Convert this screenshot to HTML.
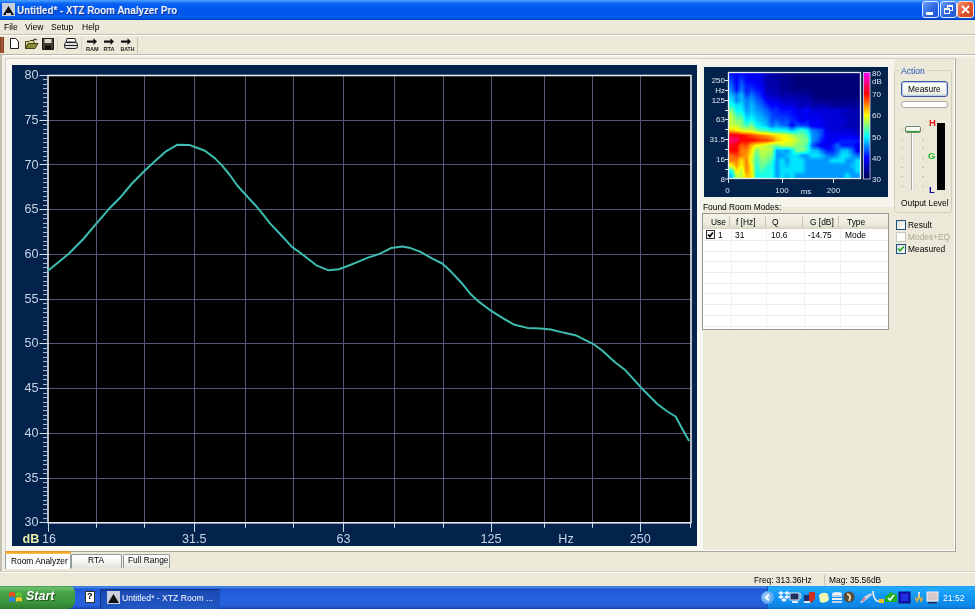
<!DOCTYPE html>
<html><head><meta charset="utf-8">
<style>
*{margin:0;padding:0;box-sizing:border-box}
html,body{width:975px;height:609px;overflow:hidden;background:#ece9d8;font-family:"Liberation Sans",sans-serif;position:relative}
.a{position:absolute}
.t{position:absolute;white-space:nowrap;line-height:1;will-change:transform}
#title{left:0;top:0;width:975px;height:20px;background:linear-gradient(#4aa0ff 0,#3088fa 1.5px,#0c64f2 3.5px,#005af0 7px,#0056ea 14px,#0860f2 17px,#0048d4 19px,#0038b0 20px)}
.ax{font-size:12.6px;fill:#c6d4e4;font-family:"Liberation Sans",sans-serif}
.db{font-size:12.6px;font-weight:bold;fill:#e6eea8;font-family:"Liberation Sans",sans-serif}
.sl{font-size:8px;fill:#dde4ee;font-family:"Liberation Sans",sans-serif}
.menu{font-size:8.5px;color:#000;top:22.5px}
.tb{font-size:8.4px;color:#000}
</style></head><body>
<!-- title bar -->
<div id="title" class="a"></div>
<svg class="a" style="left:2px;top:3px" width="13" height="13" viewBox="0 0 13 13">
<rect x="0" y="0" width="13" height="13" fill="#c8d0dc"/>
<path d="M1,12 L6.5,3 L12,12 Z" fill="#101010"/>
<rect x="4" y="10" width="5" height="2" fill="#d0d0d0"/>
</svg>
<div class="t" style="left:16.5px;top:5px;font-size:11.4px;font-weight:bold;color:#fff;text-shadow:1px 1px 0 #0a2a8a;transform:scaleX(0.86);transform-origin:0 0">Untitled* - XTZ Room Analyzer Pro</div>
<!-- window buttons -->
<div class="a" style="left:922px;top:1px;width:17px;height:17px;border:1px solid #dfe8ff;border-radius:3px;background:linear-gradient(135deg,#6b9ef8,#2a62e0 60%,#1f55d0)"></div>
<div class="a" style="left:926px;top:12px;width:7px;height:3px;background:#fff"></div>
<div class="a" style="left:940px;top:1px;width:17px;height:17px;border:1px solid #dfe8ff;border-radius:3px;background:linear-gradient(135deg,#6b9ef8,#2a62e0 60%,#1f55d0)"></div>
<div class="a" style="left:947px;top:5px;width:6px;height:6px;border:1px solid #fff;border-top-width:2px"></div>
<div class="a" style="left:944px;top:8px;width:6px;height:6px;border:1px solid #fff;border-top-width:2px;background:#2f66e0"></div>
<div class="a" style="left:957px;top:1px;width:17px;height:17px;border:1px solid #f4e0d8;border-radius:3px;background:linear-gradient(135deg,#f08c6c,#e0542c 55%,#c8401c)"></div>
<svg class="a" style="left:960px;top:4px" width="11" height="11"><path d="M2,2 L9,9 M9,2 L2,9" stroke="#fff" stroke-width="1.8"/></svg>
<!-- menu -->
<div class="t menu" style="left:4px">File</div>
<div class="t menu" style="left:25.2px">View</div>
<div class="t menu" style="left:51.3px">Setup</div>
<div class="t menu" style="left:81.5px">Help</div>
<div class="a" style="left:0;top:34px;width:975px;height:1px;background:#c5c2b2"></div>
<div class="a" style="left:0;top:35px;width:975px;height:1px;background:#fff"></div>
<!-- toolbar -->
<div class="a" style="left:0;top:37px;width:4px;height:16px;background:linear-gradient(90deg,#7a3a1a,#b06040,#7a3a1a)"></div>
<div class="a" style="left:0;top:54px;width:975px;height:1px;background:#bcb8a8"></div>
<div class="a" style="left:0;top:55px;width:975px;height:1px;background:#fff"></div>
<div class="a" style="left:137px;top:37px;width:1px;height:16px;background:#c5c2b2"></div>
<div class="a" style="left:57px;top:38px;width:1px;height:14px;background:#d4d0c0"></div>
<div class="a" style="left:81px;top:38px;width:1px;height:14px;background:#d4d0c0"></div>
<!-- new -->
<svg class="a" style="left:9px;top:38px" width="11" height="12"><path d="M1.5,0.5 H6.5 L9.5,3.5 V10.5 H1.5 Z" fill="#fff" stroke="#202020"/></svg>
<!-- open -->
<svg class="a" style="left:25px;top:38px" width="14" height="12"><path d="M0.5,3.5 H4 L5,2.5 H9 V10.5 H0.5 Z" fill="#d8d890" stroke="#40401a"/><path d="M0.5,10.5 L3,5.5 H13 L10,10.5 Z" fill="#8a8a38" stroke="#40401a"/><path d="M8,2 Q10,0 12,2" fill="none" stroke="#202020"/></svg>
<!-- save -->
<svg class="a" style="left:42px;top:38px" width="12" height="12"><rect x="0.5" y="0.5" width="11" height="11" fill="#404028" stroke="#202010"/><rect x="2.5" y="1" width="7" height="4" fill="#d8d8c8"/><rect x="3" y="7.5" width="6" height="4" fill="#101010"/></svg>
<!-- print -->
<svg class="a" style="left:64px;top:38px" width="14" height="12"><path d="M3,0.5 H11 L12,4 H2 Z" fill="#fff" stroke="#202020"/><rect x="0.5" y="4.5" width="13" height="6" rx="2" fill="#e0e0e0" stroke="#202020"/><line x1="1" y1="7.5" x2="13" y2="7.5" stroke="#202020"/></svg>
<!-- arrows -->
<svg class="a" style="left:84px;top:37px;will-change:transform" width="54" height="16">
<g fill="#101010"><rect x="3" y="3.5" width="7" height="2.2"/><path d="M9.5,1.2 L13,4.6 L9.5,8Z"/>
<rect x="20" y="3.5" width="7" height="2.2"/><path d="M26.5,1.2 L30,4.6 L26.5,8Z"/>
<rect x="37" y="3.5" width="7" height="2.2"/><path d="M43.5,1.2 L47,4.6 L43.5,8Z"/></g>
<g font-size="5.6" font-weight="bold" font-family="Liberation Sans" fill="#202020">
<text x="2" y="14">RAM</text><text x="19.5" y="14">RTA</text><text x="36.5" y="14" textLength="14" lengthAdjust="spacingAndGlyphs">BATH</text></g>
</svg>
<!-- main panel border -->
<div class="a" style="left:0;top:55px;width:2px;height:517px;background:#c4c0b0"></div>
<div class="a" style="left:2px;top:56px;width:973px;height:2px;background:#f2f0e6"></div>
<div class="a" style="left:2px;top:55px;width:3px;height:516px;background:#f2f0e6"></div>
<div class="a" style="left:5px;top:58px;width:951px;height:494px;border-top:1px solid #d4d0c2;border-left:1px solid #d4d0c2;border-right:1px solid #a8a496;border-bottom:1px solid #a8a496;box-shadow:inset -1px -1px 0 #fff"></div>
<div class="a" style="left:6px;top:59px;width:697px;height:492px;background:#f7f6f0"></div>
<div class="a" style="left:698px;top:59px;width:1px;height:492px;background:#fff"></div>
<div class="a" style="left:699px;top:59px;width:195px;height:148px;background:#f4f3ec"></div>
<!-- chart -->
<svg class="a" style="left:0;top:0;will-change:transform" width="975" height="609">
<rect x="12" y="65" width="685" height="481" fill="#04234c"/>
<rect x="48" y="75.5" width="643" height="447.29999999999995" fill="#000"/>
<line x1="48" y1="478.5" x2="691" y2="478.5" stroke="#56547a" stroke-width="1"/>
<line x1="48" y1="433.5" x2="691" y2="433.5" stroke="#56547a" stroke-width="1"/>
<line x1="48" y1="388.5" x2="691" y2="388.5" stroke="#56547a" stroke-width="1"/>
<line x1="48" y1="343.5" x2="691" y2="343.5" stroke="#56547a" stroke-width="1"/>
<line x1="48" y1="299.5" x2="691" y2="299.5" stroke="#56547a" stroke-width="1"/>
<line x1="48" y1="254.5" x2="691" y2="254.5" stroke="#56547a" stroke-width="1"/>
<line x1="48" y1="209.5" x2="691" y2="209.5" stroke="#56547a" stroke-width="1"/>
<line x1="48" y1="164.5" x2="691" y2="164.5" stroke="#56547a" stroke-width="1"/>
<line x1="48" y1="120.5" x2="691" y2="120.5" stroke="#56547a" stroke-width="1"/>
<line x1="96.5" y1="75.5" x2="96.5" y2="522.8" stroke="#56547a" stroke-width="1"/>
<line x1="144.5" y1="75.5" x2="144.5" y2="522.8" stroke="#56547a" stroke-width="1"/>
<line x1="194.5" y1="75.5" x2="194.5" y2="522.8" stroke="#56547a" stroke-width="1"/>
<line x1="245.5" y1="75.5" x2="245.5" y2="522.8" stroke="#56547a" stroke-width="1"/>
<line x1="293.5" y1="75.5" x2="293.5" y2="522.8" stroke="#56547a" stroke-width="1"/>
<line x1="343.5" y1="75.5" x2="343.5" y2="522.8" stroke="#56547a" stroke-width="1"/>
<line x1="394.5" y1="75.5" x2="394.5" y2="522.8" stroke="#56547a" stroke-width="1"/>
<line x1="443.5" y1="75.5" x2="443.5" y2="522.8" stroke="#56547a" stroke-width="1"/>
<line x1="491.5" y1="75.5" x2="491.5" y2="522.8" stroke="#56547a" stroke-width="1"/>
<line x1="544.5" y1="75.5" x2="544.5" y2="522.8" stroke="#56547a" stroke-width="1"/>
<line x1="592.5" y1="75.5" x2="592.5" y2="522.8" stroke="#56547a" stroke-width="1"/>
<line x1="640.5" y1="75.5" x2="640.5" y2="522.8" stroke="#56547a" stroke-width="1"/>
<rect x="48" y="75.5" width="643" height="447.29999999999995" fill="none" stroke="#e8e8f0" stroke-width="1.6"/>
<line x1="39.5" y1="522.5" x2="48" y2="522.5" stroke="#d0dcea" stroke-width="1"/>
<line x1="43" y1="518.5" x2="47.5" y2="518.5" stroke="#aab8c8" stroke-width="1"/>
<line x1="43" y1="513.5" x2="47.5" y2="513.5" stroke="#aab8c8" stroke-width="1"/>
<line x1="43" y1="509.5" x2="47.5" y2="509.5" stroke="#aab8c8" stroke-width="1"/>
<line x1="43" y1="504.5" x2="47.5" y2="504.5" stroke="#aab8c8" stroke-width="1"/>
<line x1="43" y1="500.5" x2="47.5" y2="500.5" stroke="#aab8c8" stroke-width="1"/>
<line x1="43" y1="495.5" x2="47.5" y2="495.5" stroke="#aab8c8" stroke-width="1"/>
<line x1="43" y1="491.5" x2="47.5" y2="491.5" stroke="#aab8c8" stroke-width="1"/>
<line x1="43" y1="487.5" x2="47.5" y2="487.5" stroke="#aab8c8" stroke-width="1"/>
<line x1="43" y1="482.5" x2="47.5" y2="482.5" stroke="#aab8c8" stroke-width="1"/>
<line x1="39.5" y1="478.5" x2="48" y2="478.5" stroke="#d0dcea" stroke-width="1"/>
<line x1="43" y1="473.5" x2="47.5" y2="473.5" stroke="#aab8c8" stroke-width="1"/>
<line x1="43" y1="469.5" x2="47.5" y2="469.5" stroke="#aab8c8" stroke-width="1"/>
<line x1="43" y1="464.5" x2="47.5" y2="464.5" stroke="#aab8c8" stroke-width="1"/>
<line x1="43" y1="460.5" x2="47.5" y2="460.5" stroke="#aab8c8" stroke-width="1"/>
<line x1="43" y1="455.5" x2="47.5" y2="455.5" stroke="#aab8c8" stroke-width="1"/>
<line x1="43" y1="451.5" x2="47.5" y2="451.5" stroke="#aab8c8" stroke-width="1"/>
<line x1="43" y1="446.5" x2="47.5" y2="446.5" stroke="#aab8c8" stroke-width="1"/>
<line x1="43" y1="442.5" x2="47.5" y2="442.5" stroke="#aab8c8" stroke-width="1"/>
<line x1="43" y1="437.5" x2="47.5" y2="437.5" stroke="#aab8c8" stroke-width="1"/>
<line x1="39.5" y1="433.5" x2="48" y2="433.5" stroke="#d0dcea" stroke-width="1"/>
<line x1="43" y1="428.5" x2="47.5" y2="428.5" stroke="#aab8c8" stroke-width="1"/>
<line x1="43" y1="424.5" x2="47.5" y2="424.5" stroke="#aab8c8" stroke-width="1"/>
<line x1="43" y1="419.5" x2="47.5" y2="419.5" stroke="#aab8c8" stroke-width="1"/>
<line x1="43" y1="415.5" x2="47.5" y2="415.5" stroke="#aab8c8" stroke-width="1"/>
<line x1="43" y1="410.5" x2="47.5" y2="410.5" stroke="#aab8c8" stroke-width="1"/>
<line x1="43" y1="406.5" x2="47.5" y2="406.5" stroke="#aab8c8" stroke-width="1"/>
<line x1="43" y1="402.5" x2="47.5" y2="402.5" stroke="#aab8c8" stroke-width="1"/>
<line x1="43" y1="397.5" x2="47.5" y2="397.5" stroke="#aab8c8" stroke-width="1"/>
<line x1="43" y1="393.5" x2="47.5" y2="393.5" stroke="#aab8c8" stroke-width="1"/>
<line x1="39.5" y1="388.5" x2="48" y2="388.5" stroke="#d0dcea" stroke-width="1"/>
<line x1="43" y1="384.5" x2="47.5" y2="384.5" stroke="#aab8c8" stroke-width="1"/>
<line x1="43" y1="379.5" x2="47.5" y2="379.5" stroke="#aab8c8" stroke-width="1"/>
<line x1="43" y1="375.5" x2="47.5" y2="375.5" stroke="#aab8c8" stroke-width="1"/>
<line x1="43" y1="370.5" x2="47.5" y2="370.5" stroke="#aab8c8" stroke-width="1"/>
<line x1="43" y1="366.5" x2="47.5" y2="366.5" stroke="#aab8c8" stroke-width="1"/>
<line x1="43" y1="361.5" x2="47.5" y2="361.5" stroke="#aab8c8" stroke-width="1"/>
<line x1="43" y1="357.5" x2="47.5" y2="357.5" stroke="#aab8c8" stroke-width="1"/>
<line x1="43" y1="352.5" x2="47.5" y2="352.5" stroke="#aab8c8" stroke-width="1"/>
<line x1="43" y1="348.5" x2="47.5" y2="348.5" stroke="#aab8c8" stroke-width="1"/>
<line x1="39.5" y1="343.5" x2="48" y2="343.5" stroke="#d0dcea" stroke-width="1"/>
<line x1="43" y1="339.5" x2="47.5" y2="339.5" stroke="#aab8c8" stroke-width="1"/>
<line x1="43" y1="334.5" x2="47.5" y2="334.5" stroke="#aab8c8" stroke-width="1"/>
<line x1="43" y1="330.5" x2="47.5" y2="330.5" stroke="#aab8c8" stroke-width="1"/>
<line x1="43" y1="325.5" x2="47.5" y2="325.5" stroke="#aab8c8" stroke-width="1"/>
<line x1="43" y1="321.5" x2="47.5" y2="321.5" stroke="#aab8c8" stroke-width="1"/>
<line x1="43" y1="317.5" x2="47.5" y2="317.5" stroke="#aab8c8" stroke-width="1"/>
<line x1="43" y1="312.5" x2="47.5" y2="312.5" stroke="#aab8c8" stroke-width="1"/>
<line x1="43" y1="308.5" x2="47.5" y2="308.5" stroke="#aab8c8" stroke-width="1"/>
<line x1="43" y1="303.5" x2="47.5" y2="303.5" stroke="#aab8c8" stroke-width="1"/>
<line x1="39.5" y1="299.5" x2="48" y2="299.5" stroke="#d0dcea" stroke-width="1"/>
<line x1="43" y1="294.5" x2="47.5" y2="294.5" stroke="#aab8c8" stroke-width="1"/>
<line x1="43" y1="290.5" x2="47.5" y2="290.5" stroke="#aab8c8" stroke-width="1"/>
<line x1="43" y1="285.5" x2="47.5" y2="285.5" stroke="#aab8c8" stroke-width="1"/>
<line x1="43" y1="281.5" x2="47.5" y2="281.5" stroke="#aab8c8" stroke-width="1"/>
<line x1="43" y1="276.5" x2="47.5" y2="276.5" stroke="#aab8c8" stroke-width="1"/>
<line x1="43" y1="272.5" x2="47.5" y2="272.5" stroke="#aab8c8" stroke-width="1"/>
<line x1="43" y1="267.5" x2="47.5" y2="267.5" stroke="#aab8c8" stroke-width="1"/>
<line x1="43" y1="263.5" x2="47.5" y2="263.5" stroke="#aab8c8" stroke-width="1"/>
<line x1="43" y1="258.5" x2="47.5" y2="258.5" stroke="#aab8c8" stroke-width="1"/>
<line x1="39.5" y1="254.5" x2="48" y2="254.5" stroke="#d0dcea" stroke-width="1"/>
<line x1="43" y1="249.5" x2="47.5" y2="249.5" stroke="#aab8c8" stroke-width="1"/>
<line x1="43" y1="245.5" x2="47.5" y2="245.5" stroke="#aab8c8" stroke-width="1"/>
<line x1="43" y1="241.5" x2="47.5" y2="241.5" stroke="#aab8c8" stroke-width="1"/>
<line x1="43" y1="236.5" x2="47.5" y2="236.5" stroke="#aab8c8" stroke-width="1"/>
<line x1="43" y1="232.5" x2="47.5" y2="232.5" stroke="#aab8c8" stroke-width="1"/>
<line x1="43" y1="227.5" x2="47.5" y2="227.5" stroke="#aab8c8" stroke-width="1"/>
<line x1="43" y1="223.5" x2="47.5" y2="223.5" stroke="#aab8c8" stroke-width="1"/>
<line x1="43" y1="218.5" x2="47.5" y2="218.5" stroke="#aab8c8" stroke-width="1"/>
<line x1="43" y1="214.5" x2="47.5" y2="214.5" stroke="#aab8c8" stroke-width="1"/>
<line x1="39.5" y1="209.5" x2="48" y2="209.5" stroke="#d0dcea" stroke-width="1"/>
<line x1="43" y1="205.5" x2="47.5" y2="205.5" stroke="#aab8c8" stroke-width="1"/>
<line x1="43" y1="200.5" x2="47.5" y2="200.5" stroke="#aab8c8" stroke-width="1"/>
<line x1="43" y1="196.5" x2="47.5" y2="196.5" stroke="#aab8c8" stroke-width="1"/>
<line x1="43" y1="191.5" x2="47.5" y2="191.5" stroke="#aab8c8" stroke-width="1"/>
<line x1="43" y1="187.5" x2="47.5" y2="187.5" stroke="#aab8c8" stroke-width="1"/>
<line x1="43" y1="182.5" x2="47.5" y2="182.5" stroke="#aab8c8" stroke-width="1"/>
<line x1="43" y1="178.5" x2="47.5" y2="178.5" stroke="#aab8c8" stroke-width="1"/>
<line x1="43" y1="173.5" x2="47.5" y2="173.5" stroke="#aab8c8" stroke-width="1"/>
<line x1="43" y1="169.5" x2="47.5" y2="169.5" stroke="#aab8c8" stroke-width="1"/>
<line x1="39.5" y1="164.5" x2="48" y2="164.5" stroke="#d0dcea" stroke-width="1"/>
<line x1="43" y1="160.5" x2="47.5" y2="160.5" stroke="#aab8c8" stroke-width="1"/>
<line x1="43" y1="156.5" x2="47.5" y2="156.5" stroke="#aab8c8" stroke-width="1"/>
<line x1="43" y1="151.5" x2="47.5" y2="151.5" stroke="#aab8c8" stroke-width="1"/>
<line x1="43" y1="147.5" x2="47.5" y2="147.5" stroke="#aab8c8" stroke-width="1"/>
<line x1="43" y1="142.5" x2="47.5" y2="142.5" stroke="#aab8c8" stroke-width="1"/>
<line x1="43" y1="138.5" x2="47.5" y2="138.5" stroke="#aab8c8" stroke-width="1"/>
<line x1="43" y1="133.5" x2="47.5" y2="133.5" stroke="#aab8c8" stroke-width="1"/>
<line x1="43" y1="129.5" x2="47.5" y2="129.5" stroke="#aab8c8" stroke-width="1"/>
<line x1="43" y1="124.5" x2="47.5" y2="124.5" stroke="#aab8c8" stroke-width="1"/>
<line x1="39.5" y1="120.5" x2="48" y2="120.5" stroke="#d0dcea" stroke-width="1"/>
<line x1="43" y1="115.5" x2="47.5" y2="115.5" stroke="#aab8c8" stroke-width="1"/>
<line x1="43" y1="111.5" x2="47.5" y2="111.5" stroke="#aab8c8" stroke-width="1"/>
<line x1="43" y1="106.5" x2="47.5" y2="106.5" stroke="#aab8c8" stroke-width="1"/>
<line x1="43" y1="102.5" x2="47.5" y2="102.5" stroke="#aab8c8" stroke-width="1"/>
<line x1="43" y1="97.5" x2="47.5" y2="97.5" stroke="#aab8c8" stroke-width="1"/>
<line x1="43" y1="93.5" x2="47.5" y2="93.5" stroke="#aab8c8" stroke-width="1"/>
<line x1="43" y1="88.5" x2="47.5" y2="88.5" stroke="#aab8c8" stroke-width="1"/>
<line x1="43" y1="84.5" x2="47.5" y2="84.5" stroke="#aab8c8" stroke-width="1"/>
<line x1="43" y1="79.5" x2="47.5" y2="79.5" stroke="#aab8c8" stroke-width="1"/>
<line x1="39.5" y1="75.5" x2="48" y2="75.5" stroke="#d0dcea" stroke-width="1"/>
<line x1="48.5" y1="522.8" x2="48.5" y2="531.8" stroke="#d0dcea" stroke-width="1"/>
<line x1="96.5" y1="522.8" x2="96.5" y2="527.8" stroke="#d0dcea" stroke-width="1"/>
<line x1="144.5" y1="522.8" x2="144.5" y2="527.8" stroke="#d0dcea" stroke-width="1"/>
<line x1="194.5" y1="522.8" x2="194.5" y2="531.8" stroke="#d0dcea" stroke-width="1"/>
<line x1="245.5" y1="522.8" x2="245.5" y2="527.8" stroke="#d0dcea" stroke-width="1"/>
<line x1="293.5" y1="522.8" x2="293.5" y2="527.8" stroke="#d0dcea" stroke-width="1"/>
<line x1="343.5" y1="522.8" x2="343.5" y2="531.8" stroke="#d0dcea" stroke-width="1"/>
<line x1="394.5" y1="522.8" x2="394.5" y2="527.8" stroke="#d0dcea" stroke-width="1"/>
<line x1="443.5" y1="522.8" x2="443.5" y2="527.8" stroke="#d0dcea" stroke-width="1"/>
<line x1="491.5" y1="522.8" x2="491.5" y2="531.8" stroke="#d0dcea" stroke-width="1"/>
<line x1="544.5" y1="522.8" x2="544.5" y2="527.8" stroke="#d0dcea" stroke-width="1"/>
<line x1="592.5" y1="522.8" x2="592.5" y2="527.8" stroke="#d0dcea" stroke-width="1"/>
<line x1="640.5" y1="522.8" x2="640.5" y2="531.8" stroke="#d0dcea" stroke-width="1"/>
<line x1="690.5" y1="522.8" x2="690.5" y2="527.8" stroke="#d0dcea" stroke-width="1"/>
<text x="38.4" y="526.3" text-anchor="end" class="ax">30</text>
<text x="38.4" y="481.6" text-anchor="end" class="ax">35</text>
<text x="38.4" y="436.8" text-anchor="end" class="ax">40</text>
<text x="38.4" y="392.1" text-anchor="end" class="ax">45</text>
<text x="38.4" y="347.4" text-anchor="end" class="ax">50</text>
<text x="38.4" y="302.6" text-anchor="end" class="ax">55</text>
<text x="38.4" y="257.9" text-anchor="end" class="ax">60</text>
<text x="38.4" y="213.2" text-anchor="end" class="ax">65</text>
<text x="38.4" y="168.5" text-anchor="end" class="ax">70</text>
<text x="38.4" y="123.7" text-anchor="end" class="ax">75</text>
<text x="38.4" y="79.0" text-anchor="end" class="ax">80</text>
<text x="42" y="543" class="ax">16</text>
<text x="194.3" y="543" text-anchor="middle" class="ax">31.5</text>
<text x="343.5" y="543" text-anchor="middle" class="ax">63</text>
<text x="491.1" y="543" text-anchor="middle" class="ax">125</text>
<text x="640.3" y="543" text-anchor="middle" class="ax">250</text>
<text x="566" y="543" text-anchor="middle" class="ax">Hz</text>
<text x="22.5" y="543" class="db">dB</text>
<polyline points="47.7,271.1 68.5,254 82.9,239.5 96.5,223.3 109.1,208.8 120,197.8 131.5,184 144.7,170.8 154.5,161.6 166,151.3 177.5,144.7 189,144.9 197,147.8 204.9,150.7 214.7,158.1 221.3,164.6 229.5,174.5 237.7,186 245.9,195 255.8,205.7 264,215.6 270,223.4 279.9,233.8 291.7,246.6 302.5,254.5 316.3,265.3 328.1,270.2 339,269.3 345,267 357.3,262.1 368,257.6 379.5,253.9 391,248.1 402.4,246.5 410.6,248.1 420,251.6 431.8,258.3 442.2,263.5 451,271.6 461.4,282.7 470.2,293.7 479.1,301.9 490.9,310.7 502.7,318.1 514.5,324.8 527.3,327.9 540.6,328.5 550.9,329.5 563.2,332.6 576.5,335.6 586.8,340.8 593,343.8 602.2,350.5 615,362.3 624.8,369.7 641.2,387.7 657.6,404.2 667.4,411.5 675.6,416.5 682.2,428.8 689.1,441.1" fill="none" stroke="#3dbdb0" stroke-width="2" stroke-linejoin="round"/>
</svg>
<!-- spectrogram -->
<div class="a" style="left:704px;top:67px;width:184px;height:130px;background:#04234c"></div>
<svg class="a" style="left:729px;top:73px" width="131" height="105" shape-rendering="crispEdges"><rect x="0" y="0" width="3" height="3" fill="#0019ff"/><rect x="3" y="0" width="3" height="3" fill="#000fff"/><rect x="6" y="0" width="3" height="3" fill="#0000ff"/><rect x="9" y="0" width="3" height="3" fill="#000eff"/><rect x="12" y="0" width="3" height="3" fill="#0014ff"/><rect x="15" y="0" width="3" height="3" fill="#0005ff"/><rect x="18" y="0" width="3" height="3" fill="#0000f9"/><rect x="21" y="0" width="3" height="3" fill="#0000ef"/><rect x="24" y="0" width="3" height="3" fill="#0000f3"/><rect x="27" y="0" width="3" height="3" fill="#0000f3"/><rect x="30" y="0" width="3" height="3" fill="#0000e5"/><rect x="33" y="0" width="3" height="3" fill="#0000d0"/><rect x="36" y="0" width="3" height="3" fill="#0000b5"/><rect x="39" y="0" width="3" height="3" fill="#0000aa"/><rect x="42" y="0" width="3" height="3" fill="#0000a3"/><rect x="45" y="0" width="3" height="3" fill="#0000a3"/><rect x="48" y="0" width="3" height="3" fill="#00009d"/><rect x="51" y="0" width="3" height="3" fill="#000091"/><rect x="54" y="0" width="3" height="3" fill="#00008f"/><rect x="57" y="0" width="3" height="3" fill="#00008e"/><rect x="60" y="0" width="3" height="3" fill="#00008a"/><rect x="63" y="0" width="3" height="3" fill="#000084"/><rect x="66" y="0" width="3" height="3" fill="#00007d"/><rect x="69" y="0" width="3" height="3" fill="#00007b"/><rect x="72" y="0" width="3" height="3" fill="#00007b"/><rect x="75" y="0" width="3" height="3" fill="#00007b"/><rect x="78" y="0" width="3" height="3" fill="#00007b"/><rect x="81" y="0" width="3" height="3" fill="#00007b"/><rect x="84" y="0" width="3" height="3" fill="#000079"/><rect x="87" y="0" width="3" height="3" fill="#000077"/><rect x="90" y="0" width="3" height="3" fill="#000077"/><rect x="93" y="0" width="3" height="3" fill="#000077"/><rect x="96" y="0" width="3" height="3" fill="#000077"/><rect x="99" y="0" width="3" height="3" fill="#000077"/><rect x="102" y="0" width="3" height="3" fill="#000077"/><rect x="105" y="0" width="3" height="3" fill="#000077"/><rect x="108" y="0" width="3" height="3" fill="#000077"/><rect x="111" y="0" width="3" height="3" fill="#000077"/><rect x="114" y="0" width="3" height="3" fill="#000077"/><rect x="117" y="0" width="3" height="3" fill="#000077"/><rect x="120" y="0" width="3" height="3" fill="#000077"/><rect x="123" y="0" width="3" height="3" fill="#000077"/><rect x="126" y="0" width="3" height="3" fill="#000077"/><rect x="129" y="0" width="3" height="3" fill="#000077"/><rect x="0" y="3" width="3" height="3" fill="#0028ff"/><rect x="3" y="3" width="3" height="3" fill="#0018ff"/><rect x="6" y="3" width="3" height="3" fill="#0000ff"/><rect x="9" y="3" width="3" height="3" fill="#0017ff"/><rect x="12" y="3" width="3" height="3" fill="#0021ff"/><rect x="15" y="3" width="3" height="3" fill="#0009ff"/><rect x="18" y="3" width="3" height="3" fill="#0000fb"/><rect x="21" y="3" width="3" height="3" fill="#0000f5"/><rect x="24" y="3" width="3" height="3" fill="#0000f6"/><rect x="27" y="3" width="3" height="3" fill="#0000f3"/><rect x="30" y="3" width="3" height="3" fill="#0000e5"/><rect x="33" y="3" width="3" height="3" fill="#0000d0"/><rect x="36" y="3" width="3" height="3" fill="#0000b5"/><rect x="39" y="3" width="3" height="3" fill="#0000aa"/><rect x="42" y="3" width="3" height="3" fill="#0000a3"/><rect x="45" y="3" width="3" height="3" fill="#0000a3"/><rect x="48" y="3" width="3" height="3" fill="#00009d"/><rect x="51" y="3" width="3" height="3" fill="#000091"/><rect x="54" y="3" width="3" height="3" fill="#00008f"/><rect x="57" y="3" width="3" height="3" fill="#00008e"/><rect x="60" y="3" width="3" height="3" fill="#000088"/><rect x="63" y="3" width="3" height="3" fill="#000082"/><rect x="66" y="3" width="3" height="3" fill="#00007b"/><rect x="69" y="3" width="3" height="3" fill="#00007a"/><rect x="72" y="3" width="3" height="3" fill="#00007a"/><rect x="75" y="3" width="3" height="3" fill="#00007a"/><rect x="78" y="3" width="3" height="3" fill="#00007a"/><rect x="81" y="3" width="3" height="3" fill="#00007a"/><rect x="84" y="3" width="3" height="3" fill="#000079"/><rect x="87" y="3" width="3" height="3" fill="#000077"/><rect x="90" y="3" width="3" height="3" fill="#000077"/><rect x="93" y="3" width="3" height="3" fill="#000077"/><rect x="96" y="3" width="3" height="3" fill="#000077"/><rect x="99" y="3" width="3" height="3" fill="#000077"/><rect x="102" y="3" width="3" height="3" fill="#000077"/><rect x="105" y="3" width="3" height="3" fill="#000077"/><rect x="108" y="3" width="3" height="3" fill="#000077"/><rect x="111" y="3" width="3" height="3" fill="#000077"/><rect x="114" y="3" width="3" height="3" fill="#000077"/><rect x="117" y="3" width="3" height="3" fill="#000077"/><rect x="120" y="3" width="3" height="3" fill="#000077"/><rect x="123" y="3" width="3" height="3" fill="#000077"/><rect x="126" y="3" width="3" height="3" fill="#000077"/><rect x="129" y="3" width="3" height="3" fill="#000077"/><rect x="0" y="6" width="3" height="3" fill="#003fff"/><rect x="3" y="6" width="3" height="3" fill="#0026ff"/><rect x="6" y="6" width="3" height="3" fill="#0000ff"/><rect x="9" y="6" width="3" height="3" fill="#0025ff"/><rect x="12" y="6" width="3" height="3" fill="#0034ff"/><rect x="15" y="6" width="3" height="3" fill="#000eff"/><rect x="18" y="6" width="3" height="3" fill="#0000ff"/><rect x="21" y="6" width="3" height="3" fill="#0000ff"/><rect x="24" y="6" width="3" height="3" fill="#0000fa"/><rect x="27" y="6" width="3" height="3" fill="#0000f3"/><rect x="30" y="6" width="3" height="3" fill="#0000e5"/><rect x="33" y="6" width="3" height="3" fill="#0000d0"/><rect x="36" y="6" width="3" height="3" fill="#0000b5"/><rect x="39" y="6" width="3" height="3" fill="#0000aa"/><rect x="42" y="6" width="3" height="3" fill="#0000a3"/><rect x="45" y="6" width="3" height="3" fill="#0000a3"/><rect x="48" y="6" width="3" height="3" fill="#00009d"/><rect x="51" y="6" width="3" height="3" fill="#000091"/><rect x="54" y="6" width="3" height="3" fill="#00008f"/><rect x="57" y="6" width="3" height="3" fill="#00008e"/><rect x="60" y="6" width="3" height="3" fill="#000087"/><rect x="63" y="6" width="3" height="3" fill="#000080"/><rect x="66" y="6" width="3" height="3" fill="#000079"/><rect x="69" y="6" width="3" height="3" fill="#000077"/><rect x="72" y="6" width="3" height="3" fill="#000077"/><rect x="75" y="6" width="3" height="3" fill="#000077"/><rect x="78" y="6" width="3" height="3" fill="#000077"/><rect x="81" y="6" width="3" height="3" fill="#000077"/><rect x="84" y="6" width="3" height="3" fill="#000077"/><rect x="87" y="6" width="3" height="3" fill="#000077"/><rect x="90" y="6" width="3" height="3" fill="#000077"/><rect x="93" y="6" width="3" height="3" fill="#000077"/><rect x="96" y="6" width="3" height="3" fill="#000077"/><rect x="99" y="6" width="3" height="3" fill="#000077"/><rect x="102" y="6" width="3" height="3" fill="#000077"/><rect x="105" y="6" width="3" height="3" fill="#000077"/><rect x="108" y="6" width="3" height="3" fill="#000077"/><rect x="111" y="6" width="3" height="3" fill="#000077"/><rect x="114" y="6" width="3" height="3" fill="#000077"/><rect x="117" y="6" width="3" height="3" fill="#000077"/><rect x="120" y="6" width="3" height="3" fill="#000077"/><rect x="123" y="6" width="3" height="3" fill="#000077"/><rect x="126" y="6" width="3" height="3" fill="#000077"/><rect x="129" y="6" width="3" height="3" fill="#000077"/><rect x="0" y="9" width="3" height="3" fill="#0056ff"/><rect x="3" y="9" width="3" height="3" fill="#0034ff"/><rect x="6" y="9" width="3" height="3" fill="#0000ff"/><rect x="9" y="9" width="3" height="3" fill="#0032ff"/><rect x="12" y="9" width="3" height="3" fill="#0049ff"/><rect x="15" y="9" width="3" height="3" fill="#001fff"/><rect x="18" y="9" width="3" height="3" fill="#000fff"/><rect x="21" y="9" width="3" height="3" fill="#000fff"/><rect x="24" y="9" width="3" height="3" fill="#0003ff"/><rect x="27" y="9" width="3" height="3" fill="#0000f8"/><rect x="30" y="9" width="3" height="3" fill="#0000ed"/><rect x="33" y="9" width="3" height="3" fill="#0000d6"/><rect x="36" y="9" width="3" height="3" fill="#0000b6"/><rect x="39" y="9" width="3" height="3" fill="#0000aa"/><rect x="42" y="9" width="3" height="3" fill="#0000a4"/><rect x="45" y="9" width="3" height="3" fill="#0000a7"/><rect x="48" y="9" width="3" height="3" fill="#0000a1"/><rect x="51" y="9" width="3" height="3" fill="#000093"/><rect x="54" y="9" width="3" height="3" fill="#000092"/><rect x="57" y="9" width="3" height="3" fill="#000090"/><rect x="60" y="9" width="3" height="3" fill="#000089"/><rect x="63" y="9" width="3" height="3" fill="#000081"/><rect x="66" y="9" width="3" height="3" fill="#000079"/><rect x="69" y="9" width="3" height="3" fill="#000077"/><rect x="72" y="9" width="3" height="3" fill="#000077"/><rect x="75" y="9" width="3" height="3" fill="#000077"/><rect x="78" y="9" width="3" height="3" fill="#000077"/><rect x="81" y="9" width="3" height="3" fill="#000077"/><rect x="84" y="9" width="3" height="3" fill="#000077"/><rect x="87" y="9" width="3" height="3" fill="#000077"/><rect x="90" y="9" width="3" height="3" fill="#000077"/><rect x="93" y="9" width="3" height="3" fill="#000077"/><rect x="96" y="9" width="3" height="3" fill="#000077"/><rect x="99" y="9" width="3" height="3" fill="#000077"/><rect x="102" y="9" width="3" height="3" fill="#000077"/><rect x="105" y="9" width="3" height="3" fill="#000077"/><rect x="108" y="9" width="3" height="3" fill="#000077"/><rect x="111" y="9" width="3" height="3" fill="#000077"/><rect x="114" y="9" width="3" height="3" fill="#000077"/><rect x="117" y="9" width="3" height="3" fill="#000077"/><rect x="120" y="9" width="3" height="3" fill="#000077"/><rect x="123" y="9" width="3" height="3" fill="#000077"/><rect x="126" y="9" width="3" height="3" fill="#000077"/><rect x="129" y="9" width="3" height="3" fill="#000077"/><rect x="0" y="12" width="3" height="3" fill="#006bff"/><rect x="3" y="12" width="3" height="3" fill="#0043ff"/><rect x="6" y="12" width="3" height="3" fill="#0006ff"/><rect x="9" y="12" width="3" height="3" fill="#0040ff"/><rect x="12" y="12" width="3" height="3" fill="#005cff"/><rect x="15" y="12" width="3" height="3" fill="#002bff"/><rect x="18" y="12" width="3" height="3" fill="#001cff"/><rect x="21" y="12" width="3" height="3" fill="#0020ff"/><rect x="24" y="12" width="3" height="3" fill="#0011ff"/><rect x="27" y="12" width="3" height="3" fill="#0001ff"/><rect x="30" y="12" width="3" height="3" fill="#0000f7"/><rect x="33" y="12" width="3" height="3" fill="#0000de"/><rect x="36" y="12" width="3" height="3" fill="#0000b9"/><rect x="39" y="12" width="3" height="3" fill="#0000ad"/><rect x="42" y="12" width="3" height="3" fill="#0000a7"/><rect x="45" y="12" width="3" height="3" fill="#0000aa"/><rect x="48" y="12" width="3" height="3" fill="#0000a4"/><rect x="51" y="12" width="3" height="3" fill="#000096"/><rect x="54" y="12" width="3" height="3" fill="#000094"/><rect x="57" y="12" width="3" height="3" fill="#000093"/><rect x="60" y="12" width="3" height="3" fill="#00008c"/><rect x="63" y="12" width="3" height="3" fill="#000084"/><rect x="66" y="12" width="3" height="3" fill="#00007c"/><rect x="69" y="12" width="3" height="3" fill="#00007b"/><rect x="72" y="12" width="3" height="3" fill="#00007b"/><rect x="75" y="12" width="3" height="3" fill="#00007b"/><rect x="78" y="12" width="3" height="3" fill="#00007a"/><rect x="81" y="12" width="3" height="3" fill="#000078"/><rect x="84" y="12" width="3" height="3" fill="#000077"/><rect x="87" y="12" width="3" height="3" fill="#000077"/><rect x="90" y="12" width="3" height="3" fill="#000077"/><rect x="93" y="12" width="3" height="3" fill="#000077"/><rect x="96" y="12" width="3" height="3" fill="#000077"/><rect x="99" y="12" width="3" height="3" fill="#000077"/><rect x="102" y="12" width="3" height="3" fill="#000077"/><rect x="105" y="12" width="3" height="3" fill="#000077"/><rect x="108" y="12" width="3" height="3" fill="#000077"/><rect x="111" y="12" width="3" height="3" fill="#000077"/><rect x="114" y="12" width="3" height="3" fill="#000077"/><rect x="117" y="12" width="3" height="3" fill="#000077"/><rect x="120" y="12" width="3" height="3" fill="#000077"/><rect x="123" y="12" width="3" height="3" fill="#000077"/><rect x="126" y="12" width="3" height="3" fill="#000077"/><rect x="129" y="12" width="3" height="3" fill="#000077"/><rect x="0" y="15" width="3" height="3" fill="#007aff"/><rect x="3" y="15" width="3" height="3" fill="#0052ff"/><rect x="6" y="15" width="3" height="3" fill="#0015ff"/><rect x="9" y="15" width="3" height="3" fill="#004fff"/><rect x="12" y="15" width="3" height="3" fill="#0069ff"/><rect x="15" y="15" width="3" height="3" fill="#002fff"/><rect x="18" y="15" width="3" height="3" fill="#0024ff"/><rect x="21" y="15" width="3" height="3" fill="#0037ff"/><rect x="24" y="15" width="3" height="3" fill="#0024ff"/><rect x="27" y="15" width="3" height="3" fill="#0012ff"/><rect x="30" y="15" width="3" height="3" fill="#0008ff"/><rect x="33" y="15" width="3" height="3" fill="#0000ea"/><rect x="36" y="15" width="3" height="3" fill="#0000c0"/><rect x="39" y="15" width="3" height="3" fill="#0000b6"/><rect x="42" y="15" width="3" height="3" fill="#0000af"/><rect x="45" y="15" width="3" height="3" fill="#0000ac"/><rect x="48" y="15" width="3" height="3" fill="#0000a4"/><rect x="51" y="15" width="3" height="3" fill="#000098"/><rect x="54" y="15" width="3" height="3" fill="#000096"/><rect x="57" y="15" width="3" height="3" fill="#000095"/><rect x="60" y="15" width="3" height="3" fill="#00008e"/><rect x="63" y="15" width="3" height="3" fill="#000089"/><rect x="66" y="15" width="3" height="3" fill="#000085"/><rect x="69" y="15" width="3" height="3" fill="#000084"/><rect x="72" y="15" width="3" height="3" fill="#000084"/><rect x="75" y="15" width="3" height="3" fill="#000084"/><rect x="78" y="15" width="3" height="3" fill="#000081"/><rect x="81" y="15" width="3" height="3" fill="#000079"/><rect x="84" y="15" width="3" height="3" fill="#000077"/><rect x="87" y="15" width="3" height="3" fill="#000077"/><rect x="90" y="15" width="3" height="3" fill="#000077"/><rect x="93" y="15" width="3" height="3" fill="#000077"/><rect x="96" y="15" width="3" height="3" fill="#000077"/><rect x="99" y="15" width="3" height="3" fill="#000077"/><rect x="102" y="15" width="3" height="3" fill="#000077"/><rect x="105" y="15" width="3" height="3" fill="#000077"/><rect x="108" y="15" width="3" height="3" fill="#000077"/><rect x="111" y="15" width="3" height="3" fill="#000077"/><rect x="114" y="15" width="3" height="3" fill="#000077"/><rect x="117" y="15" width="3" height="3" fill="#000077"/><rect x="120" y="15" width="3" height="3" fill="#000077"/><rect x="123" y="15" width="3" height="3" fill="#000077"/><rect x="126" y="15" width="3" height="3" fill="#000077"/><rect x="129" y="15" width="3" height="3" fill="#000077"/><rect x="0" y="18" width="3" height="3" fill="#0099ff"/><rect x="3" y="18" width="3" height="3" fill="#0076ff"/><rect x="6" y="18" width="3" height="3" fill="#0043ff"/><rect x="9" y="18" width="3" height="3" fill="#0074ff"/><rect x="12" y="18" width="3" height="3" fill="#0084ff"/><rect x="15" y="18" width="3" height="3" fill="#0042ff"/><rect x="18" y="18" width="3" height="3" fill="#003aff"/><rect x="21" y="18" width="3" height="3" fill="#0057ff"/><rect x="24" y="18" width="3" height="3" fill="#003eff"/><rect x="27" y="18" width="3" height="3" fill="#0025ff"/><rect x="30" y="18" width="3" height="3" fill="#0017ff"/><rect x="33" y="18" width="3" height="3" fill="#0000f2"/><rect x="36" y="18" width="3" height="3" fill="#0000cb"/><rect x="39" y="18" width="3" height="3" fill="#0000bf"/><rect x="42" y="18" width="3" height="3" fill="#0000b7"/><rect x="45" y="18" width="3" height="3" fill="#0000b4"/><rect x="48" y="18" width="3" height="3" fill="#0000ab"/><rect x="51" y="18" width="3" height="3" fill="#00009e"/><rect x="54" y="18" width="3" height="3" fill="#00009e"/><rect x="57" y="18" width="3" height="3" fill="#0000a0"/><rect x="60" y="18" width="3" height="3" fill="#000099"/><rect x="63" y="18" width="3" height="3" fill="#000096"/><rect x="66" y="18" width="3" height="3" fill="#000094"/><rect x="69" y="18" width="3" height="3" fill="#000091"/><rect x="72" y="18" width="3" height="3" fill="#00008e"/><rect x="75" y="18" width="3" height="3" fill="#00008f"/><rect x="78" y="18" width="3" height="3" fill="#00008a"/><rect x="81" y="18" width="3" height="3" fill="#000080"/><rect x="84" y="18" width="3" height="3" fill="#00007b"/><rect x="87" y="18" width="3" height="3" fill="#000077"/><rect x="90" y="18" width="3" height="3" fill="#000077"/><rect x="93" y="18" width="3" height="3" fill="#000077"/><rect x="96" y="18" width="3" height="3" fill="#000077"/><rect x="99" y="18" width="3" height="3" fill="#000077"/><rect x="102" y="18" width="3" height="3" fill="#000077"/><rect x="105" y="18" width="3" height="3" fill="#000077"/><rect x="108" y="18" width="3" height="3" fill="#000077"/><rect x="111" y="18" width="3" height="3" fill="#000077"/><rect x="114" y="18" width="3" height="3" fill="#000077"/><rect x="117" y="18" width="3" height="3" fill="#000077"/><rect x="120" y="18" width="3" height="3" fill="#000077"/><rect x="123" y="18" width="3" height="3" fill="#000077"/><rect x="126" y="18" width="3" height="3" fill="#000077"/><rect x="129" y="18" width="3" height="3" fill="#000077"/><rect x="0" y="21" width="3" height="3" fill="#00bfff"/><rect x="3" y="21" width="3" height="3" fill="#00a6ff"/><rect x="6" y="21" width="3" height="3" fill="#0080ff"/><rect x="9" y="21" width="3" height="3" fill="#00a4ff"/><rect x="12" y="21" width="3" height="3" fill="#00a8ff"/><rect x="15" y="21" width="3" height="3" fill="#005cff"/><rect x="18" y="21" width="3" height="3" fill="#0057ff"/><rect x="21" y="21" width="3" height="3" fill="#007dff"/><rect x="24" y="21" width="3" height="3" fill="#005bff"/><rect x="27" y="21" width="3" height="3" fill="#0039ff"/><rect x="30" y="21" width="3" height="3" fill="#0022ff"/><rect x="33" y="21" width="3" height="3" fill="#0000fa"/><rect x="36" y="21" width="3" height="3" fill="#0000d6"/><rect x="39" y="21" width="3" height="3" fill="#0000c8"/><rect x="42" y="21" width="3" height="3" fill="#0000bf"/><rect x="45" y="21" width="3" height="3" fill="#0000bf"/><rect x="48" y="21" width="3" height="3" fill="#0000b6"/><rect x="51" y="21" width="3" height="3" fill="#0000a5"/><rect x="54" y="21" width="3" height="3" fill="#0000a9"/><rect x="57" y="21" width="3" height="3" fill="#0000ae"/><rect x="60" y="21" width="3" height="3" fill="#0000a9"/><rect x="63" y="21" width="3" height="3" fill="#0000a7"/><rect x="66" y="21" width="3" height="3" fill="#0000a7"/><rect x="69" y="21" width="3" height="3" fill="#00009f"/><rect x="72" y="21" width="3" height="3" fill="#000097"/><rect x="75" y="21" width="3" height="3" fill="#00009a"/><rect x="78" y="21" width="3" height="3" fill="#000096"/><rect x="81" y="21" width="3" height="3" fill="#00008a"/><rect x="84" y="21" width="3" height="3" fill="#000080"/><rect x="87" y="21" width="3" height="3" fill="#000077"/><rect x="90" y="21" width="3" height="3" fill="#000077"/><rect x="93" y="21" width="3" height="3" fill="#000077"/><rect x="96" y="21" width="3" height="3" fill="#000077"/><rect x="99" y="21" width="3" height="3" fill="#000077"/><rect x="102" y="21" width="3" height="3" fill="#000077"/><rect x="105" y="21" width="3" height="3" fill="#000077"/><rect x="108" y="21" width="3" height="3" fill="#000077"/><rect x="111" y="21" width="3" height="3" fill="#000077"/><rect x="114" y="21" width="3" height="3" fill="#000077"/><rect x="117" y="21" width="3" height="3" fill="#000077"/><rect x="120" y="21" width="3" height="3" fill="#000077"/><rect x="123" y="21" width="3" height="3" fill="#000077"/><rect x="126" y="21" width="3" height="3" fill="#000077"/><rect x="129" y="21" width="3" height="3" fill="#000077"/><rect x="0" y="24" width="3" height="3" fill="#00d6ff"/><rect x="3" y="24" width="3" height="3" fill="#00b4ff"/><rect x="6" y="24" width="3" height="3" fill="#0080ff"/><rect x="9" y="24" width="3" height="3" fill="#00a4ff"/><rect x="12" y="24" width="3" height="3" fill="#00afff"/><rect x="15" y="24" width="3" height="3" fill="#007aff"/><rect x="18" y="24" width="3" height="3" fill="#0075ff"/><rect x="21" y="24" width="3" height="3" fill="#008dff"/><rect x="24" y="24" width="3" height="3" fill="#006fff"/><rect x="27" y="24" width="3" height="3" fill="#0050ff"/><rect x="30" y="24" width="3" height="3" fill="#0039ff"/><rect x="33" y="24" width="3" height="3" fill="#0015ff"/><rect x="36" y="24" width="3" height="3" fill="#0000f0"/><rect x="39" y="24" width="3" height="3" fill="#0000e0"/><rect x="42" y="24" width="3" height="3" fill="#0000d5"/><rect x="45" y="24" width="3" height="3" fill="#0000d8"/><rect x="48" y="24" width="3" height="3" fill="#0000d0"/><rect x="51" y="24" width="3" height="3" fill="#0000c0"/><rect x="54" y="24" width="3" height="3" fill="#0000bc"/><rect x="57" y="24" width="3" height="3" fill="#0000bb"/><rect x="60" y="24" width="3" height="3" fill="#0000b9"/><rect x="63" y="24" width="3" height="3" fill="#0000b6"/><rect x="66" y="24" width="3" height="3" fill="#0000b3"/><rect x="69" y="24" width="3" height="3" fill="#0000ac"/><rect x="72" y="24" width="3" height="3" fill="#0000a6"/><rect x="75" y="24" width="3" height="3" fill="#0000a8"/><rect x="78" y="24" width="3" height="3" fill="#0000a4"/><rect x="81" y="24" width="3" height="3" fill="#000098"/><rect x="84" y="24" width="3" height="3" fill="#00008c"/><rect x="87" y="24" width="3" height="3" fill="#000081"/><rect x="90" y="24" width="3" height="3" fill="#000081"/><rect x="93" y="24" width="3" height="3" fill="#000081"/><rect x="96" y="24" width="3" height="3" fill="#000081"/><rect x="99" y="24" width="3" height="3" fill="#000081"/><rect x="102" y="24" width="3" height="3" fill="#000081"/><rect x="105" y="24" width="3" height="3" fill="#000081"/><rect x="108" y="24" width="3" height="3" fill="#000081"/><rect x="111" y="24" width="3" height="3" fill="#000081"/><rect x="114" y="24" width="3" height="3" fill="#000081"/><rect x="117" y="24" width="3" height="3" fill="#000081"/><rect x="120" y="24" width="3" height="3" fill="#000081"/><rect x="123" y="24" width="3" height="3" fill="#000081"/><rect x="126" y="24" width="3" height="3" fill="#000081"/><rect x="129" y="24" width="3" height="3" fill="#000081"/><rect x="0" y="27" width="3" height="3" fill="#00efff"/><rect x="3" y="27" width="3" height="3" fill="#00cbff"/><rect x="6" y="27" width="3" height="3" fill="#0094ff"/><rect x="9" y="27" width="3" height="3" fill="#00b1ff"/><rect x="12" y="27" width="3" height="3" fill="#00baff"/><rect x="15" y="27" width="3" height="3" fill="#008fff"/><rect x="18" y="27" width="3" height="3" fill="#008bff"/><rect x="21" y="27" width="3" height="3" fill="#009fff"/><rect x="24" y="27" width="3" height="3" fill="#0082ff"/><rect x="27" y="27" width="3" height="3" fill="#0065ff"/><rect x="30" y="27" width="3" height="3" fill="#0050ff"/><rect x="33" y="27" width="3" height="3" fill="#0031ff"/><rect x="36" y="27" width="3" height="3" fill="#000cff"/><rect x="39" y="27" width="3" height="3" fill="#0000f5"/><rect x="42" y="27" width="3" height="3" fill="#0000e9"/><rect x="45" y="27" width="3" height="3" fill="#0000ee"/><rect x="48" y="27" width="3" height="3" fill="#0000e7"/><rect x="51" y="27" width="3" height="3" fill="#0000d7"/><rect x="54" y="27" width="3" height="3" fill="#0000cf"/><rect x="57" y="27" width="3" height="3" fill="#0000c9"/><rect x="60" y="27" width="3" height="3" fill="#0000c9"/><rect x="63" y="27" width="3" height="3" fill="#0000c6"/><rect x="66" y="27" width="3" height="3" fill="#0000bf"/><rect x="69" y="27" width="3" height="3" fill="#0000b7"/><rect x="72" y="27" width="3" height="3" fill="#0000b0"/><rect x="75" y="27" width="3" height="3" fill="#0000b4"/><rect x="78" y="27" width="3" height="3" fill="#0000b1"/><rect x="81" y="27" width="3" height="3" fill="#0000a5"/><rect x="84" y="27" width="3" height="3" fill="#000099"/><rect x="87" y="27" width="3" height="3" fill="#00008f"/><rect x="90" y="27" width="3" height="3" fill="#00008f"/><rect x="93" y="27" width="3" height="3" fill="#00008f"/><rect x="96" y="27" width="3" height="3" fill="#00008f"/><rect x="99" y="27" width="3" height="3" fill="#00008d"/><rect x="102" y="27" width="3" height="3" fill="#00008a"/><rect x="105" y="27" width="3" height="3" fill="#00008a"/><rect x="108" y="27" width="3" height="3" fill="#00008a"/><rect x="111" y="27" width="3" height="3" fill="#00008a"/><rect x="114" y="27" width="3" height="3" fill="#00008a"/><rect x="117" y="27" width="3" height="3" fill="#00008a"/><rect x="120" y="27" width="3" height="3" fill="#00008a"/><rect x="123" y="27" width="3" height="3" fill="#00008a"/><rect x="126" y="27" width="3" height="3" fill="#00008a"/><rect x="129" y="27" width="3" height="3" fill="#00008a"/><rect x="0" y="30" width="3" height="3" fill="#0fffef"/><rect x="3" y="30" width="3" height="3" fill="#00f6ff"/><rect x="6" y="30" width="3" height="3" fill="#00d1ff"/><rect x="9" y="30" width="3" height="3" fill="#00d8ff"/><rect x="12" y="30" width="3" height="3" fill="#00ccff"/><rect x="15" y="30" width="3" height="3" fill="#0094ff"/><rect x="18" y="30" width="3" height="3" fill="#0094ff"/><rect x="21" y="30" width="3" height="3" fill="#00b5ff"/><rect x="24" y="30" width="3" height="3" fill="#0095ff"/><rect x="27" y="30" width="3" height="3" fill="#0076ff"/><rect x="30" y="30" width="3" height="3" fill="#0065ff"/><rect x="33" y="30" width="3" height="3" fill="#0049ff"/><rect x="36" y="30" width="3" height="3" fill="#0027ff"/><rect x="39" y="30" width="3" height="3" fill="#000bff"/><rect x="42" y="30" width="3" height="3" fill="#0000fa"/><rect x="45" y="30" width="3" height="3" fill="#0000ff"/><rect x="48" y="30" width="3" height="3" fill="#0000f9"/><rect x="51" y="30" width="3" height="3" fill="#0000ea"/><rect x="54" y="30" width="3" height="3" fill="#0000e2"/><rect x="57" y="30" width="3" height="3" fill="#0000dc"/><rect x="60" y="30" width="3" height="3" fill="#0000dc"/><rect x="63" y="30" width="3" height="3" fill="#0000d6"/><rect x="66" y="30" width="3" height="3" fill="#0000ca"/><rect x="69" y="30" width="3" height="3" fill="#0000bc"/><rect x="72" y="30" width="3" height="3" fill="#0000b0"/><rect x="75" y="30" width="3" height="3" fill="#0000ba"/><rect x="78" y="30" width="3" height="3" fill="#0000ba"/><rect x="81" y="30" width="3" height="3" fill="#0000ae"/><rect x="84" y="30" width="3" height="3" fill="#0000aa"/><rect x="87" y="30" width="3" height="3" fill="#0000a7"/><rect x="90" y="30" width="3" height="3" fill="#0000a7"/><rect x="93" y="30" width="3" height="3" fill="#0000a7"/><rect x="96" y="30" width="3" height="3" fill="#0000a7"/><rect x="99" y="30" width="3" height="3" fill="#00009f"/><rect x="102" y="30" width="3" height="3" fill="#000094"/><rect x="105" y="30" width="3" height="3" fill="#000094"/><rect x="108" y="30" width="3" height="3" fill="#000094"/><rect x="111" y="30" width="3" height="3" fill="#000094"/><rect x="114" y="30" width="3" height="3" fill="#000094"/><rect x="117" y="30" width="3" height="3" fill="#000094"/><rect x="120" y="30" width="3" height="3" fill="#000094"/><rect x="123" y="30" width="3" height="3" fill="#000094"/><rect x="126" y="30" width="3" height="3" fill="#000094"/><rect x="129" y="30" width="3" height="3" fill="#000094"/><rect x="0" y="33" width="3" height="3" fill="#42ffbc"/><rect x="3" y="33" width="3" height="3" fill="#22ffdc"/><rect x="6" y="33" width="3" height="3" fill="#00f0ff"/><rect x="9" y="33" width="3" height="3" fill="#00efff"/><rect x="12" y="33" width="3" height="3" fill="#00ddff"/><rect x="15" y="33" width="3" height="3" fill="#00a0ff"/><rect x="18" y="33" width="3" height="3" fill="#009dff"/><rect x="21" y="33" width="3" height="3" fill="#00bdff"/><rect x="24" y="33" width="3" height="3" fill="#00a1ff"/><rect x="27" y="33" width="3" height="3" fill="#0085ff"/><rect x="30" y="33" width="3" height="3" fill="#0076ff"/><rect x="33" y="33" width="3" height="3" fill="#005fff"/><rect x="36" y="33" width="3" height="3" fill="#0043ff"/><rect x="39" y="33" width="3" height="3" fill="#0027ff"/><rect x="42" y="33" width="3" height="3" fill="#0012ff"/><rect x="45" y="33" width="3" height="3" fill="#0017ff"/><rect x="48" y="33" width="3" height="3" fill="#000dff"/><rect x="51" y="33" width="3" height="3" fill="#0000fa"/><rect x="54" y="33" width="3" height="3" fill="#0000f4"/><rect x="57" y="33" width="3" height="3" fill="#0000f1"/><rect x="60" y="33" width="3" height="3" fill="#0000f1"/><rect x="63" y="33" width="3" height="3" fill="#0000e9"/><rect x="66" y="33" width="3" height="3" fill="#0000da"/><rect x="69" y="33" width="3" height="3" fill="#0000cf"/><rect x="72" y="33" width="3" height="3" fill="#0000c9"/><rect x="75" y="33" width="3" height="3" fill="#0000d8"/><rect x="78" y="33" width="3" height="3" fill="#0000d6"/><rect x="81" y="33" width="3" height="3" fill="#0000c3"/><rect x="84" y="33" width="3" height="3" fill="#0000bf"/><rect x="87" y="33" width="3" height="3" fill="#0000bf"/><rect x="90" y="33" width="3" height="3" fill="#0000bf"/><rect x="93" y="33" width="3" height="3" fill="#0000bf"/><rect x="96" y="33" width="3" height="3" fill="#0000bf"/><rect x="99" y="33" width="3" height="3" fill="#0000b9"/><rect x="102" y="33" width="3" height="3" fill="#0000b1"/><rect x="105" y="33" width="3" height="3" fill="#0000b1"/><rect x="108" y="33" width="3" height="3" fill="#0000af"/><rect x="111" y="33" width="3" height="3" fill="#0000ab"/><rect x="114" y="33" width="3" height="3" fill="#0000aa"/><rect x="117" y="33" width="3" height="3" fill="#0000aa"/><rect x="120" y="33" width="3" height="3" fill="#0000a4"/><rect x="123" y="33" width="3" height="3" fill="#0000a1"/><rect x="126" y="33" width="3" height="3" fill="#0000a1"/><rect x="129" y="33" width="3" height="3" fill="#0000a1"/><rect x="0" y="36" width="3" height="3" fill="#7fff7f"/><rect x="3" y="36" width="3" height="3" fill="#4dffb1"/><rect x="6" y="36" width="3" height="3" fill="#01fffd"/><rect x="9" y="36" width="3" height="3" fill="#00ffff"/><rect x="12" y="36" width="3" height="3" fill="#00ecff"/><rect x="15" y="36" width="3" height="3" fill="#00afff"/><rect x="18" y="36" width="3" height="3" fill="#00a7ff"/><rect x="21" y="36" width="3" height="3" fill="#00bdff"/><rect x="24" y="36" width="3" height="3" fill="#00a9ff"/><rect x="27" y="36" width="3" height="3" fill="#0095ff"/><rect x="30" y="36" width="3" height="3" fill="#0085ff"/><rect x="33" y="36" width="3" height="3" fill="#0074ff"/><rect x="36" y="36" width="3" height="3" fill="#0061ff"/><rect x="39" y="36" width="3" height="3" fill="#0044ff"/><rect x="42" y="36" width="3" height="3" fill="#002cff"/><rect x="45" y="36" width="3" height="3" fill="#002cff"/><rect x="48" y="36" width="3" height="3" fill="#0022ff"/><rect x="51" y="36" width="3" height="3" fill="#000fff"/><rect x="54" y="36" width="3" height="3" fill="#000cff"/><rect x="57" y="36" width="3" height="3" fill="#000cff"/><rect x="60" y="36" width="3" height="3" fill="#000cff"/><rect x="63" y="36" width="3" height="3" fill="#0000fe"/><rect x="66" y="36" width="3" height="3" fill="#0000ed"/><rect x="69" y="36" width="3" height="3" fill="#0000eb"/><rect x="72" y="36" width="3" height="3" fill="#0000ed"/><rect x="75" y="36" width="3" height="3" fill="#0002ff"/><rect x="78" y="36" width="3" height="3" fill="#0000fc"/><rect x="81" y="36" width="3" height="3" fill="#0000dd"/><rect x="84" y="36" width="3" height="3" fill="#0000d7"/><rect x="87" y="36" width="3" height="3" fill="#0000d7"/><rect x="90" y="36" width="3" height="3" fill="#0000d7"/><rect x="93" y="36" width="3" height="3" fill="#0000d7"/><rect x="96" y="36" width="3" height="3" fill="#0000d7"/><rect x="99" y="36" width="3" height="3" fill="#0000d7"/><rect x="102" y="36" width="3" height="3" fill="#0000d7"/><rect x="105" y="36" width="3" height="3" fill="#0000d7"/><rect x="108" y="36" width="3" height="3" fill="#0000d3"/><rect x="111" y="36" width="3" height="3" fill="#0000ca"/><rect x="114" y="36" width="3" height="3" fill="#0000c7"/><rect x="117" y="36" width="3" height="3" fill="#0000c6"/><rect x="120" y="36" width="3" height="3" fill="#0000b8"/><rect x="123" y="36" width="3" height="3" fill="#0000af"/><rect x="126" y="36" width="3" height="3" fill="#0000af"/><rect x="129" y="36" width="3" height="3" fill="#0000af"/><rect x="0" y="39" width="3" height="3" fill="#a5ff59"/><rect x="3" y="39" width="3" height="3" fill="#73ff8b"/><rect x="6" y="39" width="3" height="3" fill="#27ffd7"/><rect x="9" y="39" width="3" height="3" fill="#26ffd8"/><rect x="12" y="39" width="3" height="3" fill="#11ffed"/><rect x="15" y="39" width="3" height="3" fill="#00caff"/><rect x="18" y="39" width="3" height="3" fill="#00beff"/><rect x="21" y="39" width="3" height="3" fill="#00d4ff"/><rect x="24" y="39" width="3" height="3" fill="#00c0ff"/><rect x="27" y="39" width="3" height="3" fill="#00abff"/><rect x="30" y="39" width="3" height="3" fill="#009cff"/><rect x="33" y="39" width="3" height="3" fill="#008aff"/><rect x="36" y="39" width="3" height="3" fill="#0074ff"/><rect x="39" y="39" width="3" height="3" fill="#0057ff"/><rect x="42" y="39" width="3" height="3" fill="#003dff"/><rect x="45" y="39" width="3" height="3" fill="#0031ff"/><rect x="48" y="39" width="3" height="3" fill="#0028ff"/><rect x="51" y="39" width="3" height="3" fill="#0020ff"/><rect x="54" y="39" width="3" height="3" fill="#001fff"/><rect x="57" y="39" width="3" height="3" fill="#001eff"/><rect x="60" y="39" width="3" height="3" fill="#0015ff"/><rect x="63" y="39" width="3" height="3" fill="#0007ff"/><rect x="66" y="39" width="3" height="3" fill="#0000f8"/><rect x="69" y="39" width="3" height="3" fill="#0000f1"/><rect x="72" y="39" width="3" height="3" fill="#0000ec"/><rect x="75" y="39" width="3" height="3" fill="#0000f3"/><rect x="78" y="39" width="3" height="3" fill="#0000f2"/><rect x="81" y="39" width="3" height="3" fill="#0000e5"/><rect x="84" y="39" width="3" height="3" fill="#0000e4"/><rect x="87" y="39" width="3" height="3" fill="#0000e4"/><rect x="90" y="39" width="3" height="3" fill="#0000dc"/><rect x="93" y="39" width="3" height="3" fill="#0000d7"/><rect x="96" y="39" width="3" height="3" fill="#0000d7"/><rect x="99" y="39" width="3" height="3" fill="#0000d7"/><rect x="102" y="39" width="3" height="3" fill="#0000d7"/><rect x="105" y="39" width="3" height="3" fill="#0000d7"/><rect x="108" y="39" width="3" height="3" fill="#0000d3"/><rect x="111" y="39" width="3" height="3" fill="#0000ca"/><rect x="114" y="39" width="3" height="3" fill="#0000c1"/><rect x="117" y="39" width="3" height="3" fill="#0000b8"/><rect x="120" y="39" width="3" height="3" fill="#0000b3"/><rect x="123" y="39" width="3" height="3" fill="#0000af"/><rect x="126" y="39" width="3" height="3" fill="#0000af"/><rect x="129" y="39" width="3" height="3" fill="#0000af"/><rect x="0" y="42" width="3" height="3" fill="#bfff3f"/><rect x="3" y="42" width="3" height="3" fill="#92ff6c"/><rect x="6" y="42" width="3" height="3" fill="#4dffb1"/><rect x="9" y="42" width="3" height="3" fill="#4cffb2"/><rect x="12" y="42" width="3" height="3" fill="#34ffca"/><rect x="15" y="42" width="3" height="3" fill="#00e4ff"/><rect x="18" y="42" width="3" height="3" fill="#00d6ff"/><rect x="21" y="42" width="3" height="3" fill="#00eeff"/><rect x="24" y="42" width="3" height="3" fill="#00d5ff"/><rect x="27" y="42" width="3" height="3" fill="#00beff"/><rect x="30" y="42" width="3" height="3" fill="#00b0ff"/><rect x="33" y="42" width="3" height="3" fill="#009eff"/><rect x="36" y="42" width="3" height="3" fill="#0087ff"/><rect x="39" y="42" width="3" height="3" fill="#0066ff"/><rect x="42" y="42" width="3" height="3" fill="#0049ff"/><rect x="45" y="42" width="3" height="3" fill="#003cff"/><rect x="48" y="42" width="3" height="3" fill="#0034ff"/><rect x="51" y="42" width="3" height="3" fill="#0030ff"/><rect x="54" y="42" width="3" height="3" fill="#0032ff"/><rect x="57" y="42" width="3" height="3" fill="#0031ff"/><rect x="60" y="42" width="3" height="3" fill="#001fff"/><rect x="63" y="42" width="3" height="3" fill="#0011ff"/><rect x="66" y="42" width="3" height="3" fill="#0005ff"/><rect x="69" y="42" width="3" height="3" fill="#0000f6"/><rect x="72" y="42" width="3" height="3" fill="#0000eb"/><rect x="75" y="42" width="3" height="3" fill="#0000ef"/><rect x="78" y="42" width="3" height="3" fill="#0000ef"/><rect x="81" y="42" width="3" height="3" fill="#0000eb"/><rect x="84" y="42" width="3" height="3" fill="#0000ee"/><rect x="87" y="42" width="3" height="3" fill="#0000f0"/><rect x="90" y="42" width="3" height="3" fill="#0000e3"/><rect x="93" y="42" width="3" height="3" fill="#0000da"/><rect x="96" y="42" width="3" height="3" fill="#0000d7"/><rect x="99" y="42" width="3" height="3" fill="#0000d7"/><rect x="102" y="42" width="3" height="3" fill="#0000d7"/><rect x="105" y="42" width="3" height="3" fill="#0000d7"/><rect x="108" y="42" width="3" height="3" fill="#0000d4"/><rect x="111" y="42" width="3" height="3" fill="#0000cc"/><rect x="114" y="42" width="3" height="3" fill="#0000c1"/><rect x="117" y="42" width="3" height="3" fill="#0000b4"/><rect x="120" y="42" width="3" height="3" fill="#0000b1"/><rect x="123" y="42" width="3" height="3" fill="#0000af"/><rect x="126" y="42" width="3" height="3" fill="#0000af"/><rect x="129" y="42" width="3" height="3" fill="#0000af"/><rect x="0" y="45" width="3" height="3" fill="#bfff3f"/><rect x="3" y="45" width="3" height="3" fill="#a1ff5d"/><rect x="6" y="45" width="3" height="3" fill="#73ff8b"/><rect x="9" y="45" width="3" height="3" fill="#72ff8c"/><rect x="12" y="45" width="3" height="3" fill="#58ffa6"/><rect x="15" y="45" width="3" height="3" fill="#00fffe"/><rect x="18" y="45" width="3" height="3" fill="#00efff"/><rect x="21" y="45" width="3" height="3" fill="#0dfff1"/><rect x="24" y="45" width="3" height="3" fill="#00e7ff"/><rect x="27" y="45" width="3" height="3" fill="#00c7ff"/><rect x="30" y="45" width="3" height="3" fill="#00bdff"/><rect x="33" y="45" width="3" height="3" fill="#00aeff"/><rect x="36" y="45" width="3" height="3" fill="#009aff"/><rect x="39" y="45" width="3" height="3" fill="#006fff"/><rect x="42" y="45" width="3" height="3" fill="#004dff"/><rect x="45" y="45" width="3" height="3" fill="#0053ff"/><rect x="48" y="45" width="3" height="3" fill="#004dff"/><rect x="51" y="45" width="3" height="3" fill="#003dff"/><rect x="54" y="45" width="3" height="3" fill="#0043ff"/><rect x="57" y="45" width="3" height="3" fill="#0046ff"/><rect x="60" y="45" width="3" height="3" fill="#002eff"/><rect x="63" y="45" width="3" height="3" fill="#001cff"/><rect x="66" y="45" width="3" height="3" fill="#0011ff"/><rect x="69" y="45" width="3" height="3" fill="#0000fa"/><rect x="72" y="45" width="3" height="3" fill="#0000ed"/><rect x="75" y="45" width="3" height="3" fill="#0000fc"/><rect x="78" y="45" width="3" height="3" fill="#0000fd"/><rect x="81" y="45" width="3" height="3" fill="#0000ee"/><rect x="84" y="45" width="3" height="3" fill="#0000f2"/><rect x="87" y="45" width="3" height="3" fill="#0000fa"/><rect x="90" y="45" width="3" height="3" fill="#0000f0"/><rect x="93" y="45" width="3" height="3" fill="#0000e5"/><rect x="96" y="45" width="3" height="3" fill="#0000da"/><rect x="99" y="45" width="3" height="3" fill="#0000d7"/><rect x="102" y="45" width="3" height="3" fill="#0000d7"/><rect x="105" y="45" width="3" height="3" fill="#0000d7"/><rect x="108" y="45" width="3" height="3" fill="#0000d6"/><rect x="111" y="45" width="3" height="3" fill="#0000d4"/><rect x="114" y="45" width="3" height="3" fill="#0000cc"/><rect x="117" y="45" width="3" height="3" fill="#0000c2"/><rect x="120" y="45" width="3" height="3" fill="#0000b6"/><rect x="123" y="45" width="3" height="3" fill="#0000af"/><rect x="126" y="45" width="3" height="3" fill="#0000af"/><rect x="129" y="45" width="3" height="3" fill="#0000af"/><rect x="0" y="48" width="3" height="3" fill="#bfff3f"/><rect x="3" y="48" width="3" height="3" fill="#b0ff4e"/><rect x="6" y="48" width="3" height="3" fill="#99ff65"/><rect x="9" y="48" width="3" height="3" fill="#8aff74"/><rect x="12" y="48" width="3" height="3" fill="#6aff94"/><rect x="15" y="48" width="3" height="3" fill="#24ffda"/><rect x="18" y="48" width="3" height="3" fill="#1effe0"/><rect x="21" y="48" width="3" height="3" fill="#40ffbe"/><rect x="24" y="48" width="3" height="3" fill="#0bfff3"/><rect x="27" y="48" width="3" height="3" fill="#00ddff"/><rect x="30" y="48" width="3" height="3" fill="#00d2ff"/><rect x="33" y="48" width="3" height="3" fill="#00c2ff"/><rect x="36" y="48" width="3" height="3" fill="#00aeff"/><rect x="39" y="48" width="3" height="3" fill="#007fff"/><rect x="42" y="48" width="3" height="3" fill="#005dff"/><rect x="45" y="48" width="3" height="3" fill="#0070ff"/><rect x="48" y="48" width="3" height="3" fill="#006cff"/><rect x="51" y="48" width="3" height="3" fill="#0054ff"/><rect x="54" y="48" width="3" height="3" fill="#0054ff"/><rect x="57" y="48" width="3" height="3" fill="#0050ff"/><rect x="60" y="48" width="3" height="3" fill="#002aff"/><rect x="63" y="48" width="3" height="3" fill="#001dff"/><rect x="66" y="48" width="3" height="3" fill="#002aff"/><rect x="69" y="48" width="3" height="3" fill="#0019ff"/><rect x="72" y="48" width="3" height="3" fill="#0008ff"/><rect x="75" y="48" width="3" height="3" fill="#0017ff"/><rect x="78" y="48" width="3" height="3" fill="#0010ff"/><rect x="81" y="48" width="3" height="3" fill="#0000f4"/><rect x="84" y="48" width="3" height="3" fill="#0000f4"/><rect x="87" y="48" width="3" height="3" fill="#0000f8"/><rect x="90" y="48" width="3" height="3" fill="#0000f2"/><rect x="93" y="48" width="3" height="3" fill="#0000e9"/><rect x="96" y="48" width="3" height="3" fill="#0000da"/><rect x="99" y="48" width="3" height="3" fill="#0000d7"/><rect x="102" y="48" width="3" height="3" fill="#0000d7"/><rect x="105" y="48" width="3" height="3" fill="#0000d7"/><rect x="108" y="48" width="3" height="3" fill="#0000d5"/><rect x="111" y="48" width="3" height="3" fill="#0000d1"/><rect x="114" y="48" width="3" height="3" fill="#0000c8"/><rect x="117" y="48" width="3" height="3" fill="#0000bd"/><rect x="120" y="48" width="3" height="3" fill="#0000b5"/><rect x="123" y="48" width="3" height="3" fill="#0000af"/><rect x="126" y="48" width="3" height="3" fill="#0000af"/><rect x="129" y="48" width="3" height="3" fill="#0000af"/><rect x="0" y="51" width="3" height="3" fill="#bfff3f"/><rect x="3" y="51" width="3" height="3" fill="#bfff3f"/><rect x="6" y="51" width="3" height="3" fill="#bfff3f"/><rect x="9" y="51" width="3" height="3" fill="#9aff64"/><rect x="12" y="51" width="3" height="3" fill="#74ff8a"/><rect x="15" y="51" width="3" height="3" fill="#4effb0"/><rect x="18" y="51" width="3" height="3" fill="#57ffa7"/><rect x="21" y="51" width="3" height="3" fill="#7dff81"/><rect x="24" y="51" width="3" height="3" fill="#37ffc7"/><rect x="27" y="51" width="3" height="3" fill="#00fbff"/><rect x="30" y="51" width="3" height="3" fill="#00ebff"/><rect x="33" y="51" width="3" height="3" fill="#00d8ff"/><rect x="36" y="51" width="3" height="3" fill="#00c1ff"/><rect x="39" y="51" width="3" height="3" fill="#0092ff"/><rect x="42" y="51" width="3" height="3" fill="#0073ff"/><rect x="45" y="51" width="3" height="3" fill="#0091ff"/><rect x="48" y="51" width="3" height="3" fill="#008eff"/><rect x="51" y="51" width="3" height="3" fill="#0070ff"/><rect x="54" y="51" width="3" height="3" fill="#0065ff"/><rect x="57" y="51" width="3" height="3" fill="#0055ff"/><rect x="60" y="51" width="3" height="3" fill="#001cff"/><rect x="63" y="51" width="3" height="3" fill="#0018ff"/><rect x="66" y="51" width="3" height="3" fill="#004aff"/><rect x="69" y="51" width="3" height="3" fill="#0049ff"/><rect x="72" y="51" width="3" height="3" fill="#003eff"/><rect x="75" y="51" width="3" height="3" fill="#0037ff"/><rect x="78" y="51" width="3" height="3" fill="#0021ff"/><rect x="81" y="51" width="3" height="3" fill="#0000fc"/><rect x="84" y="51" width="3" height="3" fill="#0000f3"/><rect x="87" y="51" width="3" height="3" fill="#0000ef"/><rect x="90" y="51" width="3" height="3" fill="#0000ef"/><rect x="93" y="51" width="3" height="3" fill="#0000e9"/><rect x="96" y="51" width="3" height="3" fill="#0000da"/><rect x="99" y="51" width="3" height="3" fill="#0000d7"/><rect x="102" y="51" width="3" height="3" fill="#0000d7"/><rect x="105" y="51" width="3" height="3" fill="#0000d7"/><rect x="108" y="51" width="3" height="3" fill="#0000d3"/><rect x="111" y="51" width="3" height="3" fill="#0000ca"/><rect x="114" y="51" width="3" height="3" fill="#0000bd"/><rect x="117" y="51" width="3" height="3" fill="#0000af"/><rect x="120" y="51" width="3" height="3" fill="#0000af"/><rect x="123" y="51" width="3" height="3" fill="#0000af"/><rect x="126" y="51" width="3" height="3" fill="#0000af"/><rect x="129" y="51" width="3" height="3" fill="#0000af"/><rect x="0" y="54" width="3" height="3" fill="#fff200"/><rect x="3" y="54" width="3" height="3" fill="#fffb00"/><rect x="6" y="54" width="3" height="3" fill="#f5ff09"/><rect x="9" y="54" width="3" height="3" fill="#d4ff2a"/><rect x="12" y="54" width="3" height="3" fill="#b5ff49"/><rect x="15" y="54" width="3" height="3" fill="#9dff61"/><rect x="18" y="54" width="3" height="3" fill="#9dff61"/><rect x="21" y="54" width="3" height="3" fill="#acff52"/><rect x="24" y="54" width="3" height="3" fill="#7bff83"/><rect x="27" y="54" width="3" height="3" fill="#4cffb2"/><rect x="30" y="54" width="3" height="3" fill="#2fffcf"/><rect x="33" y="54" width="3" height="3" fill="#1effe0"/><rect x="36" y="54" width="3" height="3" fill="#15ffe9"/><rect x="39" y="54" width="3" height="3" fill="#00ecff"/><rect x="42" y="54" width="3" height="3" fill="#00ceff"/><rect x="45" y="54" width="3" height="3" fill="#00daff"/><rect x="48" y="54" width="3" height="3" fill="#00d9ff"/><rect x="51" y="54" width="3" height="3" fill="#00cdff"/><rect x="54" y="54" width="3" height="3" fill="#00c5ff"/><rect x="57" y="54" width="3" height="3" fill="#00b6ff"/><rect x="60" y="54" width="3" height="3" fill="#0089ff"/><rect x="63" y="54" width="3" height="3" fill="#0088ff"/><rect x="66" y="54" width="3" height="3" fill="#00b2ff"/><rect x="69" y="54" width="3" height="3" fill="#00c9ff"/><rect x="72" y="54" width="3" height="3" fill="#00d4ff"/><rect x="75" y="54" width="3" height="3" fill="#00bbff"/><rect x="78" y="54" width="3" height="3" fill="#0090ff"/><rect x="81" y="54" width="3" height="3" fill="#0054ff"/><rect x="84" y="54" width="3" height="3" fill="#003dff"/><rect x="87" y="54" width="3" height="3" fill="#0031ff"/><rect x="90" y="54" width="3" height="3" fill="#0023ff"/><rect x="93" y="54" width="3" height="3" fill="#000aff"/><rect x="96" y="54" width="3" height="3" fill="#0000eb"/><rect x="99" y="54" width="3" height="3" fill="#0000df"/><rect x="102" y="54" width="3" height="3" fill="#0000d7"/><rect x="105" y="54" width="3" height="3" fill="#0000d7"/><rect x="108" y="54" width="3" height="3" fill="#0000d5"/><rect x="111" y="54" width="3" height="3" fill="#0000d1"/><rect x="114" y="54" width="3" height="3" fill="#0000cc"/><rect x="117" y="54" width="3" height="3" fill="#0000c7"/><rect x="120" y="54" width="3" height="3" fill="#0000c7"/><rect x="123" y="54" width="3" height="3" fill="#0000c2"/><rect x="126" y="54" width="3" height="3" fill="#0000b4"/><rect x="129" y="54" width="3" height="3" fill="#0000af"/><rect x="0" y="57" width="3" height="3" fill="#ff9100"/><rect x="3" y="57" width="3" height="3" fill="#ff9d00"/><rect x="6" y="57" width="3" height="3" fill="#ffaf00"/><rect x="9" y="57" width="3" height="3" fill="#ffcc00"/><rect x="12" y="57" width="3" height="3" fill="#ffe400"/><rect x="15" y="57" width="3" height="3" fill="#fff400"/><rect x="18" y="57" width="3" height="3" fill="#fffc00"/><rect x="21" y="57" width="3" height="3" fill="#fcff02"/><rect x="24" y="57" width="3" height="3" fill="#dbff23"/><rect x="27" y="57" width="3" height="3" fill="#b9ff45"/><rect x="30" y="57" width="3" height="3" fill="#97ff67"/><rect x="33" y="57" width="3" height="3" fill="#87ff77"/><rect x="36" y="57" width="3" height="3" fill="#84ff7a"/><rect x="39" y="57" width="3" height="3" fill="#65ff99"/><rect x="42" y="57" width="3" height="3" fill="#48ffb6"/><rect x="45" y="57" width="3" height="3" fill="#44ffba"/><rect x="48" y="57" width="3" height="3" fill="#40ffbe"/><rect x="51" y="57" width="3" height="3" fill="#3dffc1"/><rect x="54" y="57" width="3" height="3" fill="#35ffc9"/><rect x="57" y="57" width="3" height="3" fill="#27ffd7"/><rect x="60" y="57" width="3" height="3" fill="#04fffa"/><rect x="63" y="57" width="3" height="3" fill="#00fdff"/><rect x="66" y="57" width="3" height="3" fill="#15ffe9"/><rect x="69" y="57" width="3" height="3" fill="#32ffcc"/><rect x="72" y="57" width="3" height="3" fill="#46ffb8"/><rect x="75" y="57" width="3" height="3" fill="#20ffde"/><rect x="78" y="57" width="3" height="3" fill="#00e6ff"/><rect x="81" y="57" width="3" height="3" fill="#0095ff"/><rect x="84" y="57" width="3" height="3" fill="#0078ff"/><rect x="87" y="57" width="3" height="3" fill="#0068ff"/><rect x="90" y="57" width="3" height="3" fill="#004eff"/><rect x="93" y="57" width="3" height="3" fill="#0028ff"/><rect x="96" y="57" width="3" height="3" fill="#0000f7"/><rect x="99" y="57" width="3" height="3" fill="#0000e6"/><rect x="102" y="57" width="3" height="3" fill="#0000dc"/><rect x="105" y="57" width="3" height="3" fill="#0000dc"/><rect x="108" y="57" width="3" height="3" fill="#0000dc"/><rect x="111" y="57" width="3" height="3" fill="#0000dc"/><rect x="114" y="57" width="3" height="3" fill="#0000dc"/><rect x="117" y="57" width="3" height="3" fill="#0000dc"/><rect x="120" y="57" width="3" height="3" fill="#0000dc"/><rect x="123" y="57" width="3" height="3" fill="#0000d4"/><rect x="126" y="57" width="3" height="3" fill="#0000be"/><rect x="129" y="57" width="3" height="3" fill="#0000b7"/><rect x="0" y="60" width="3" height="3" fill="#ff0700"/><rect x="3" y="60" width="3" height="3" fill="#ff0a00"/><rect x="6" y="60" width="3" height="3" fill="#ff0f00"/><rect x="9" y="60" width="3" height="3" fill="#ff2700"/><rect x="12" y="60" width="3" height="3" fill="#ff3c00"/><rect x="15" y="60" width="3" height="3" fill="#ff4b00"/><rect x="18" y="60" width="3" height="3" fill="#ff5c00"/><rect x="21" y="60" width="3" height="3" fill="#ff6f00"/><rect x="24" y="60" width="3" height="3" fill="#ff8800"/><rect x="27" y="60" width="3" height="3" fill="#ffa000"/><rect x="30" y="60" width="3" height="3" fill="#ffb400"/><rect x="33" y="60" width="3" height="3" fill="#ffc300"/><rect x="36" y="60" width="3" height="3" fill="#ffcf00"/><rect x="39" y="60" width="3" height="3" fill="#ffe800"/><rect x="42" y="60" width="3" height="3" fill="#fdff01"/><rect x="45" y="60" width="3" height="3" fill="#ebff13"/><rect x="48" y="60" width="3" height="3" fill="#dcff22"/><rect x="51" y="60" width="3" height="3" fill="#d0ff2e"/><rect x="54" y="60" width="3" height="3" fill="#c2ff3c"/><rect x="57" y="60" width="3" height="3" fill="#b2ff4c"/><rect x="60" y="60" width="3" height="3" fill="#98ff66"/><rect x="63" y="60" width="3" height="3" fill="#80ff7e"/><rect x="66" y="60" width="3" height="3" fill="#69ff95"/><rect x="69" y="60" width="3" height="3" fill="#6cff92"/><rect x="72" y="60" width="3" height="3" fill="#6dff91"/><rect x="75" y="60" width="3" height="3" fill="#47ffb7"/><rect x="78" y="60" width="3" height="3" fill="#06fff8"/><rect x="81" y="60" width="3" height="3" fill="#00a7ff"/><rect x="84" y="60" width="3" height="3" fill="#0087ff"/><rect x="87" y="60" width="3" height="3" fill="#0076ff"/><rect x="90" y="60" width="3" height="3" fill="#0053ff"/><rect x="93" y="60" width="3" height="3" fill="#0028ff"/><rect x="96" y="60" width="3" height="3" fill="#0000f7"/><rect x="99" y="60" width="3" height="3" fill="#0000ec"/><rect x="102" y="60" width="3" height="3" fill="#0000ea"/><rect x="105" y="60" width="3" height="3" fill="#0000ea"/><rect x="108" y="60" width="3" height="3" fill="#0000ea"/><rect x="111" y="60" width="3" height="3" fill="#0000ea"/><rect x="114" y="60" width="3" height="3" fill="#0000ea"/><rect x="117" y="60" width="3" height="3" fill="#0000ea"/><rect x="120" y="60" width="3" height="3" fill="#0000ea"/><rect x="123" y="60" width="3" height="3" fill="#0000e4"/><rect x="126" y="60" width="3" height="3" fill="#0000d4"/><rect x="129" y="60" width="3" height="3" fill="#0000cf"/><rect x="0" y="63" width="3" height="3" fill="#ff003f"/><rect x="3" y="63" width="3" height="3" fill="#ff003f"/><rect x="6" y="63" width="3" height="3" fill="#ff003f"/><rect x="9" y="63" width="3" height="3" fill="#ff001a"/><rect x="12" y="63" width="3" height="3" fill="#ff0200"/><rect x="15" y="63" width="3" height="3" fill="#ff0b00"/><rect x="18" y="63" width="3" height="3" fill="#ff1700"/><rect x="21" y="63" width="3" height="3" fill="#ff2500"/><rect x="24" y="63" width="3" height="3" fill="#ff3800"/><rect x="27" y="63" width="3" height="3" fill="#ff4b00"/><rect x="30" y="63" width="3" height="3" fill="#ff5a00"/><rect x="33" y="63" width="3" height="3" fill="#ff6700"/><rect x="36" y="63" width="3" height="3" fill="#ff7400"/><rect x="39" y="63" width="3" height="3" fill="#ff8900"/><rect x="42" y="63" width="3" height="3" fill="#ffa300"/><rect x="45" y="63" width="3" height="3" fill="#ffc600"/><rect x="48" y="63" width="3" height="3" fill="#ffe000"/><rect x="51" y="63" width="3" height="3" fill="#fff200"/><rect x="54" y="63" width="3" height="3" fill="#fcff02"/><rect x="57" y="63" width="3" height="3" fill="#ecff12"/><rect x="60" y="63" width="3" height="3" fill="#d8ff26"/><rect x="63" y="63" width="3" height="3" fill="#beff40"/><rect x="66" y="63" width="3" height="3" fill="#9eff60"/><rect x="69" y="63" width="3" height="3" fill="#8cff72"/><rect x="72" y="63" width="3" height="3" fill="#7cff82"/><rect x="75" y="63" width="3" height="3" fill="#65ff99"/><rect x="78" y="63" width="3" height="3" fill="#23ffdb"/><rect x="81" y="63" width="3" height="3" fill="#00b1ff"/><rect x="84" y="63" width="3" height="3" fill="#0088ff"/><rect x="87" y="63" width="3" height="3" fill="#0070ff"/><rect x="90" y="63" width="3" height="3" fill="#0047ff"/><rect x="93" y="63" width="3" height="3" fill="#001dff"/><rect x="96" y="63" width="3" height="3" fill="#0000f5"/><rect x="99" y="63" width="3" height="3" fill="#0000ef"/><rect x="102" y="63" width="3" height="3" fill="#0000ef"/><rect x="105" y="63" width="3" height="3" fill="#0000f3"/><rect x="108" y="63" width="3" height="3" fill="#0000f6"/><rect x="111" y="63" width="3" height="3" fill="#0000fa"/><rect x="114" y="63" width="3" height="3" fill="#0000fb"/><rect x="117" y="63" width="3" height="3" fill="#0000fb"/><rect x="120" y="63" width="3" height="3" fill="#0000fb"/><rect x="123" y="63" width="3" height="3" fill="#0000f8"/><rect x="126" y="63" width="3" height="3" fill="#0000f0"/><rect x="129" y="63" width="3" height="3" fill="#0000ed"/><rect x="0" y="66" width="3" height="3" fill="#ff0065"/><rect x="3" y="66" width="3" height="3" fill="#ff0065"/><rect x="6" y="66" width="3" height="3" fill="#ff0065"/><rect x="9" y="66" width="3" height="3" fill="#ff002a"/><rect x="12" y="66" width="3" height="3" fill="#ff0000"/><rect x="15" y="66" width="3" height="3" fill="#ff0000"/><rect x="18" y="66" width="3" height="3" fill="#ff0000"/><rect x="21" y="66" width="3" height="3" fill="#ff0000"/><rect x="24" y="66" width="3" height="3" fill="#ff0e00"/><rect x="27" y="66" width="3" height="3" fill="#ff1d00"/><rect x="30" y="66" width="3" height="3" fill="#ff2c00"/><rect x="33" y="66" width="3" height="3" fill="#ff3700"/><rect x="36" y="66" width="3" height="3" fill="#ff3f00"/><rect x="39" y="66" width="3" height="3" fill="#ff5400"/><rect x="42" y="66" width="3" height="3" fill="#ff7100"/><rect x="45" y="66" width="3" height="3" fill="#ffa700"/><rect x="48" y="66" width="3" height="3" fill="#ffcb00"/><rect x="51" y="66" width="3" height="3" fill="#ffe200"/><rect x="54" y="66" width="3" height="3" fill="#fff200"/><rect x="57" y="66" width="3" height="3" fill="#fcff02"/><rect x="60" y="66" width="3" height="3" fill="#ecff12"/><rect x="63" y="66" width="3" height="3" fill="#d9ff25"/><rect x="66" y="66" width="3" height="3" fill="#c3ff3b"/><rect x="69" y="66" width="3" height="3" fill="#9fff5f"/><rect x="72" y="66" width="3" height="3" fill="#7fff7f"/><rect x="75" y="66" width="3" height="3" fill="#7fff7f"/><rect x="78" y="66" width="3" height="3" fill="#3fffbf"/><rect x="81" y="66" width="3" height="3" fill="#00b5ff"/><rect x="84" y="66" width="3" height="3" fill="#0081ff"/><rect x="87" y="66" width="3" height="3" fill="#0061ff"/><rect x="90" y="66" width="3" height="3" fill="#0033ff"/><rect x="93" y="66" width="3" height="3" fill="#000cff"/><rect x="96" y="66" width="3" height="3" fill="#0000f3"/><rect x="99" y="66" width="3" height="3" fill="#0000ef"/><rect x="102" y="66" width="3" height="3" fill="#0000ef"/><rect x="105" y="66" width="3" height="3" fill="#0000f9"/><rect x="108" y="66" width="3" height="3" fill="#0005ff"/><rect x="111" y="66" width="3" height="3" fill="#0015ff"/><rect x="114" y="66" width="3" height="3" fill="#0019ff"/><rect x="117" y="66" width="3" height="3" fill="#0019ff"/><rect x="120" y="66" width="3" height="3" fill="#0019ff"/><rect x="123" y="66" width="3" height="3" fill="#0019ff"/><rect x="126" y="66" width="3" height="3" fill="#0019ff"/><rect x="129" y="66" width="3" height="3" fill="#0019ff"/><rect x="0" y="69" width="3" height="3" fill="#ff0038"/><rect x="3" y="69" width="3" height="3" fill="#ff0032"/><rect x="6" y="69" width="3" height="3" fill="#ff0028"/><rect x="9" y="69" width="3" height="3" fill="#ff1200"/><rect x="12" y="69" width="3" height="3" fill="#ff3900"/><rect x="15" y="69" width="3" height="3" fill="#ff2b00"/><rect x="18" y="69" width="3" height="3" fill="#ff4200"/><rect x="21" y="69" width="3" height="3" fill="#ff7000"/><rect x="24" y="69" width="3" height="3" fill="#ff8d00"/><rect x="27" y="69" width="3" height="3" fill="#ffa700"/><rect x="30" y="69" width="3" height="3" fill="#ffb600"/><rect x="33" y="69" width="3" height="3" fill="#ffc600"/><rect x="36" y="69" width="3" height="3" fill="#ffd700"/><rect x="39" y="69" width="3" height="3" fill="#ffed00"/><rect x="42" y="69" width="3" height="3" fill="#f8ff06"/><rect x="45" y="69" width="3" height="3" fill="#d9ff25"/><rect x="48" y="69" width="3" height="3" fill="#d3ff2b"/><rect x="51" y="69" width="3" height="3" fill="#e1ff1d"/><rect x="54" y="69" width="3" height="3" fill="#ddff21"/><rect x="57" y="69" width="3" height="3" fill="#d7ff27"/><rect x="60" y="69" width="3" height="3" fill="#d1ff2d"/><rect x="63" y="69" width="3" height="3" fill="#beff40"/><rect x="66" y="69" width="3" height="3" fill="#9eff60"/><rect x="69" y="69" width="3" height="3" fill="#8cff72"/><rect x="72" y="69" width="3" height="3" fill="#7cff82"/><rect x="75" y="69" width="3" height="3" fill="#65ff99"/><rect x="78" y="69" width="3" height="3" fill="#1bffe3"/><rect x="81" y="69" width="3" height="3" fill="#0096ff"/><rect x="84" y="69" width="3" height="3" fill="#005bff"/><rect x="87" y="69" width="3" height="3" fill="#0034ff"/><rect x="90" y="69" width="3" height="3" fill="#000fff"/><rect x="93" y="69" width="3" height="3" fill="#0000f8"/><rect x="96" y="69" width="3" height="3" fill="#0000f0"/><rect x="99" y="69" width="3" height="3" fill="#0000f7"/><rect x="102" y="69" width="3" height="3" fill="#0007ff"/><rect x="105" y="69" width="3" height="3" fill="#0028ff"/><rect x="108" y="69" width="3" height="3" fill="#0034ff"/><rect x="111" y="69" width="3" height="3" fill="#001fff"/><rect x="114" y="69" width="3" height="3" fill="#0019ff"/><rect x="117" y="69" width="3" height="3" fill="#0019ff"/><rect x="120" y="69" width="3" height="3" fill="#0019ff"/><rect x="123" y="69" width="3" height="3" fill="#0013ff"/><rect x="126" y="69" width="3" height="3" fill="#0000ff"/><rect x="129" y="69" width="3" height="3" fill="#0000fb"/><rect x="0" y="72" width="3" height="3" fill="#ff0014"/><rect x="3" y="72" width="3" height="3" fill="#ff000c"/><rect x="6" y="72" width="3" height="3" fill="#ff0000"/><rect x="9" y="72" width="3" height="3" fill="#ff3e00"/><rect x="12" y="72" width="3" height="3" fill="#ff6500"/><rect x="15" y="72" width="3" height="3" fill="#ff5300"/><rect x="18" y="72" width="3" height="3" fill="#ff7900"/><rect x="21" y="72" width="3" height="3" fill="#ffc200"/><rect x="24" y="72" width="3" height="3" fill="#fff400"/><rect x="27" y="72" width="3" height="3" fill="#e4ff1a"/><rect x="30" y="72" width="3" height="3" fill="#dfff1f"/><rect x="33" y="72" width="3" height="3" fill="#d3ff2b"/><rect x="36" y="72" width="3" height="3" fill="#c1ff3d"/><rect x="39" y="72" width="3" height="3" fill="#acff52"/><rect x="42" y="72" width="3" height="3" fill="#91ff6d"/><rect x="45" y="72" width="3" height="3" fill="#65ff99"/><rect x="48" y="72" width="3" height="3" fill="#64ff9a"/><rect x="51" y="72" width="3" height="3" fill="#87ff77"/><rect x="54" y="72" width="3" height="3" fill="#88ff76"/><rect x="57" y="72" width="3" height="3" fill="#86ff78"/><rect x="60" y="72" width="3" height="3" fill="#8fff6f"/><rect x="63" y="72" width="3" height="3" fill="#8dff71"/><rect x="66" y="72" width="3" height="3" fill="#81ff7d"/><rect x="69" y="72" width="3" height="3" fill="#7fff7f"/><rect x="72" y="72" width="3" height="3" fill="#79ff85"/><rect x="75" y="72" width="3" height="3" fill="#53ffab"/><rect x="78" y="72" width="3" height="3" fill="#08fff6"/><rect x="81" y="72" width="3" height="3" fill="#0090ff"/><rect x="84" y="72" width="3" height="3" fill="#005bff"/><rect x="87" y="72" width="3" height="3" fill="#0036ff"/><rect x="90" y="72" width="3" height="3" fill="#0013ff"/><rect x="93" y="72" width="3" height="3" fill="#0000fc"/><rect x="96" y="72" width="3" height="3" fill="#0000f6"/><rect x="99" y="72" width="3" height="3" fill="#0002ff"/><rect x="102" y="72" width="3" height="3" fill="#001cff"/><rect x="105" y="72" width="3" height="3" fill="#004aff"/><rect x="108" y="72" width="3" height="3" fill="#005bff"/><rect x="111" y="72" width="3" height="3" fill="#0042ff"/><rect x="114" y="72" width="3" height="3" fill="#003aff"/><rect x="117" y="72" width="3" height="3" fill="#003aff"/><rect x="120" y="72" width="3" height="3" fill="#002fff"/><rect x="123" y="72" width="3" height="3" fill="#001aff"/><rect x="126" y="72" width="3" height="3" fill="#0000f7"/><rect x="129" y="72" width="3" height="3" fill="#0000ef"/><rect x="0" y="75" width="3" height="3" fill="#ff0005"/><rect x="3" y="75" width="3" height="3" fill="#ff0003"/><rect x="6" y="75" width="3" height="3" fill="#ff0000"/><rect x="9" y="75" width="3" height="3" fill="#ff4700"/><rect x="12" y="75" width="3" height="3" fill="#ff7900"/><rect x="15" y="75" width="3" height="3" fill="#ff7400"/><rect x="18" y="75" width="3" height="3" fill="#ff9a00"/><rect x="21" y="75" width="3" height="3" fill="#ffda00"/><rect x="24" y="75" width="3" height="3" fill="#d4ff2a"/><rect x="27" y="75" width="3" height="3" fill="#a0ff5e"/><rect x="30" y="75" width="3" height="3" fill="#bbff43"/><rect x="33" y="75" width="3" height="3" fill="#c4ff3a"/><rect x="36" y="75" width="3" height="3" fill="#bfff3f"/><rect x="39" y="75" width="3" height="3" fill="#b0ff4e"/><rect x="42" y="75" width="3" height="3" fill="#85ff79"/><rect x="45" y="75" width="3" height="3" fill="#03fffb"/><rect x="48" y="75" width="3" height="3" fill="#00d4ff"/><rect x="51" y="75" width="3" height="3" fill="#00eeff"/><rect x="54" y="75" width="3" height="3" fill="#00e2ff"/><rect x="57" y="75" width="3" height="3" fill="#00daff"/><rect x="60" y="75" width="3" height="3" fill="#00feff"/><rect x="63" y="75" width="3" height="3" fill="#32ffcc"/><rect x="66" y="75" width="3" height="3" fill="#74ff8a"/><rect x="69" y="75" width="3" height="3" fill="#7fff7f"/><rect x="72" y="75" width="3" height="3" fill="#79ff85"/><rect x="75" y="75" width="3" height="3" fill="#53ffab"/><rect x="78" y="75" width="3" height="3" fill="#17ffe7"/><rect x="81" y="75" width="3" height="3" fill="#00bfff"/><rect x="84" y="75" width="3" height="3" fill="#00a6ff"/><rect x="87" y="75" width="3" height="3" fill="#0098ff"/><rect x="90" y="75" width="3" height="3" fill="#0068ff"/><rect x="93" y="75" width="3" height="3" fill="#003cff"/><rect x="96" y="75" width="3" height="3" fill="#0018ff"/><rect x="99" y="75" width="3" height="3" fill="#0013ff"/><rect x="102" y="75" width="3" height="3" fill="#001cff"/><rect x="105" y="75" width="3" height="3" fill="#004aff"/><rect x="108" y="75" width="3" height="3" fill="#0073ff"/><rect x="111" y="75" width="3" height="3" fill="#0094ff"/><rect x="114" y="75" width="3" height="3" fill="#009eff"/><rect x="117" y="75" width="3" height="3" fill="#009cff"/><rect x="120" y="75" width="3" height="3" fill="#0072ff"/><rect x="123" y="75" width="3" height="3" fill="#003fff"/><rect x="126" y="75" width="3" height="3" fill="#0000fc"/><rect x="129" y="75" width="3" height="3" fill="#0000ef"/><rect x="0" y="78" width="3" height="3" fill="#ff2800"/><rect x="3" y="78" width="3" height="3" fill="#ff2200"/><rect x="6" y="78" width="3" height="3" fill="#ff1900"/><rect x="9" y="78" width="3" height="3" fill="#ff5500"/><rect x="12" y="78" width="3" height="3" fill="#ff8100"/><rect x="15" y="78" width="3" height="3" fill="#ff8700"/><rect x="18" y="78" width="3" height="3" fill="#ffaf00"/><rect x="21" y="78" width="3" height="3" fill="#ffec00"/><rect x="24" y="78" width="3" height="3" fill="#afff4f"/><rect x="27" y="78" width="3" height="3" fill="#73ff8b"/><rect x="30" y="78" width="3" height="3" fill="#a9ff55"/><rect x="33" y="78" width="3" height="3" fill="#b9ff45"/><rect x="36" y="78" width="3" height="3" fill="#b0ff4e"/><rect x="39" y="78" width="3" height="3" fill="#a2ff5c"/><rect x="42" y="78" width="3" height="3" fill="#74ff8a"/><rect x="45" y="78" width="3" height="3" fill="#00ddff"/><rect x="48" y="78" width="3" height="3" fill="#00a0ff"/><rect x="51" y="78" width="3" height="3" fill="#00aeff"/><rect x="54" y="78" width="3" height="3" fill="#00acff"/><rect x="57" y="78" width="3" height="3" fill="#00afff"/><rect x="60" y="78" width="3" height="3" fill="#00d3ff"/><rect x="63" y="78" width="3" height="3" fill="#02fffc"/><rect x="66" y="78" width="3" height="3" fill="#38ffc6"/><rect x="69" y="78" width="3" height="3" fill="#33ffcb"/><rect x="72" y="78" width="3" height="3" fill="#20ffde"/><rect x="75" y="78" width="3" height="3" fill="#09fff5"/><rect x="78" y="78" width="3" height="3" fill="#00efff"/><rect x="81" y="78" width="3" height="3" fill="#00d4ff"/><rect x="84" y="78" width="3" height="3" fill="#00ceff"/><rect x="87" y="78" width="3" height="3" fill="#00caff"/><rect x="90" y="78" width="3" height="3" fill="#00a1ff"/><rect x="93" y="78" width="3" height="3" fill="#0077ff"/><rect x="96" y="78" width="3" height="3" fill="#004cff"/><rect x="99" y="78" width="3" height="3" fill="#003dff"/><rect x="102" y="78" width="3" height="3" fill="#003aff"/><rect x="105" y="78" width="3" height="3" fill="#0062ff"/><rect x="108" y="78" width="3" height="3" fill="#008dff"/><rect x="111" y="78" width="3" height="3" fill="#00c0ff"/><rect x="114" y="78" width="3" height="3" fill="#00ceff"/><rect x="117" y="78" width="3" height="3" fill="#00ccff"/><rect x="120" y="78" width="3" height="3" fill="#009aff"/><rect x="123" y="78" width="3" height="3" fill="#0066ff"/><rect x="126" y="78" width="3" height="3" fill="#002cff"/><rect x="129" y="78" width="3" height="3" fill="#0019ff"/><rect x="0" y="81" width="3" height="3" fill="#ff6500"/><rect x="3" y="81" width="3" height="3" fill="#ff5600"/><rect x="6" y="81" width="3" height="3" fill="#ff4000"/><rect x="9" y="81" width="3" height="3" fill="#ff6400"/><rect x="12" y="81" width="3" height="3" fill="#ff8400"/><rect x="15" y="81" width="3" height="3" fill="#ff9300"/><rect x="18" y="81" width="3" height="3" fill="#ffbe00"/><rect x="21" y="81" width="3" height="3" fill="#fffb00"/><rect x="24" y="81" width="3" height="3" fill="#93ff6b"/><rect x="27" y="81" width="3" height="3" fill="#53ffab"/><rect x="30" y="81" width="3" height="3" fill="#9fff5f"/><rect x="33" y="81" width="3" height="3" fill="#b1ff4d"/><rect x="36" y="81" width="3" height="3" fill="#9bff63"/><rect x="39" y="81" width="3" height="3" fill="#8bff73"/><rect x="42" y="81" width="3" height="3" fill="#60ff9e"/><rect x="45" y="81" width="3" height="3" fill="#00d7ff"/><rect x="48" y="81" width="3" height="3" fill="#0099ff"/><rect x="51" y="81" width="3" height="3" fill="#0099ff"/><rect x="54" y="81" width="3" height="3" fill="#00acff"/><rect x="57" y="81" width="3" height="3" fill="#00c3ff"/><rect x="60" y="81" width="3" height="3" fill="#00daff"/><rect x="63" y="81" width="3" height="3" fill="#00e5ff"/><rect x="66" y="81" width="3" height="3" fill="#00e5ff"/><rect x="69" y="81" width="3" height="3" fill="#00bfff"/><rect x="72" y="81" width="3" height="3" fill="#0099ff"/><rect x="75" y="81" width="3" height="3" fill="#0099ff"/><rect x="78" y="81" width="3" height="3" fill="#00aeff"/><rect x="81" y="81" width="3" height="3" fill="#00dbff"/><rect x="84" y="81" width="3" height="3" fill="#00e5ff"/><rect x="87" y="81" width="3" height="3" fill="#00e3ff"/><rect x="90" y="81" width="3" height="3" fill="#00ccff"/><rect x="93" y="81" width="3" height="3" fill="#00aeff"/><rect x="96" y="81" width="3" height="3" fill="#0088ff"/><rect x="99" y="81" width="3" height="3" fill="#0074ff"/><rect x="102" y="81" width="3" height="3" fill="#0068ff"/><rect x="105" y="81" width="3" height="3" fill="#0086ff"/><rect x="108" y="81" width="3" height="3" fill="#00aaff"/><rect x="111" y="81" width="3" height="3" fill="#00d8ff"/><rect x="114" y="81" width="3" height="3" fill="#00e5ff"/><rect x="117" y="81" width="3" height="3" fill="#00e4ff"/><rect x="120" y="81" width="3" height="3" fill="#00b6ff"/><rect x="123" y="81" width="3" height="3" fill="#008eff"/><rect x="126" y="81" width="3" height="3" fill="#006fff"/><rect x="129" y="81" width="3" height="3" fill="#0065ff"/><rect x="0" y="84" width="3" height="3" fill="#ff7500"/><rect x="3" y="84" width="3" height="3" fill="#ff6f00"/><rect x="6" y="84" width="3" height="3" fill="#ff6600"/><rect x="9" y="84" width="3" height="3" fill="#ff9800"/><rect x="12" y="84" width="3" height="3" fill="#ffb300"/><rect x="15" y="84" width="3" height="3" fill="#ff9500"/><rect x="18" y="84" width="3" height="3" fill="#ffc300"/><rect x="21" y="84" width="3" height="3" fill="#deff20"/><rect x="24" y="84" width="3" height="3" fill="#82ff7c"/><rect x="27" y="84" width="3" height="3" fill="#4dffb1"/><rect x="30" y="84" width="3" height="3" fill="#82ff7c"/><rect x="33" y="84" width="3" height="3" fill="#93ff6b"/><rect x="36" y="84" width="3" height="3" fill="#8aff74"/><rect x="39" y="84" width="3" height="3" fill="#6fff8f"/><rect x="42" y="84" width="3" height="3" fill="#3fffbf"/><rect x="45" y="84" width="3" height="3" fill="#00ccff"/><rect x="48" y="84" width="3" height="3" fill="#00a7ff"/><rect x="51" y="84" width="3" height="3" fill="#00c3ff"/><rect x="54" y="84" width="3" height="3" fill="#00b7ff"/><rect x="57" y="84" width="3" height="3" fill="#00afff"/><rect x="60" y="84" width="3" height="3" fill="#00d3ff"/><rect x="63" y="84" width="3" height="3" fill="#00e5ff"/><rect x="66" y="84" width="3" height="3" fill="#00e5ff"/><rect x="69" y="84" width="3" height="3" fill="#00d6ff"/><rect x="72" y="84" width="3" height="3" fill="#00c2ff"/><rect x="75" y="84" width="3" height="3" fill="#00a7ff"/><rect x="78" y="84" width="3" height="3" fill="#00a1ff"/><rect x="81" y="84" width="3" height="3" fill="#00b3ff"/><rect x="84" y="84" width="3" height="3" fill="#00b7ff"/><rect x="87" y="84" width="3" height="3" fill="#00b6ff"/><rect x="90" y="84" width="3" height="3" fill="#00adff"/><rect x="93" y="84" width="3" height="3" fill="#00a1ff"/><rect x="96" y="84" width="3" height="3" fill="#0092ff"/><rect x="99" y="84" width="3" height="3" fill="#009eff"/><rect x="102" y="84" width="3" height="3" fill="#00b3ff"/><rect x="105" y="84" width="3" height="3" fill="#00bfff"/><rect x="108" y="84" width="3" height="3" fill="#00ceff"/><rect x="111" y="84" width="3" height="3" fill="#00e0ff"/><rect x="114" y="84" width="3" height="3" fill="#00d2ff"/><rect x="117" y="84" width="3" height="3" fill="#00b7ff"/><rect x="120" y="84" width="3" height="3" fill="#00a4ff"/><rect x="123" y="84" width="3" height="3" fill="#009eff"/><rect x="126" y="84" width="3" height="3" fill="#00adff"/><rect x="129" y="84" width="3" height="3" fill="#00b2ff"/><rect x="0" y="87" width="3" height="3" fill="#ff9800"/><rect x="3" y="87" width="3" height="3" fill="#ff9000"/><rect x="6" y="87" width="3" height="3" fill="#ff8400"/><rect x="9" y="87" width="3" height="3" fill="#ffc000"/><rect x="12" y="87" width="3" height="3" fill="#ffd700"/><rect x="15" y="87" width="3" height="3" fill="#ff9700"/><rect x="18" y="87" width="3" height="3" fill="#ffc100"/><rect x="21" y="87" width="3" height="3" fill="#d2ff2c"/><rect x="24" y="87" width="3" height="3" fill="#79ff85"/><rect x="27" y="87" width="3" height="3" fill="#43ffbb"/><rect x="30" y="87" width="3" height="3" fill="#6dff91"/><rect x="33" y="87" width="3" height="3" fill="#7bff83"/><rect x="36" y="87" width="3" height="3" fill="#73ff8b"/><rect x="39" y="87" width="3" height="3" fill="#53ffab"/><rect x="42" y="87" width="3" height="3" fill="#22ffdc"/><rect x="45" y="87" width="3" height="3" fill="#00c3ff"/><rect x="48" y="87" width="3" height="3" fill="#00b1ff"/><rect x="51" y="87" width="3" height="3" fill="#00dfff"/><rect x="54" y="87" width="3" height="3" fill="#00c2ff"/><rect x="57" y="87" width="3" height="3" fill="#00a8ff"/><rect x="60" y="87" width="3" height="3" fill="#00d1ff"/><rect x="63" y="87" width="3" height="3" fill="#00e5ff"/><rect x="66" y="87" width="3" height="3" fill="#00e5ff"/><rect x="69" y="87" width="3" height="3" fill="#00e5ff"/><rect x="72" y="87" width="3" height="3" fill="#00deff"/><rect x="75" y="87" width="3" height="3" fill="#00b1ff"/><rect x="78" y="87" width="3" height="3" fill="#0099ff"/><rect x="81" y="87" width="3" height="3" fill="#0099ff"/><rect x="84" y="87" width="3" height="3" fill="#0099ff"/><rect x="87" y="87" width="3" height="3" fill="#0099ff"/><rect x="90" y="87" width="3" height="3" fill="#0099ff"/><rect x="93" y="87" width="3" height="3" fill="#0099ff"/><rect x="96" y="87" width="3" height="3" fill="#0099ff"/><rect x="99" y="87" width="3" height="3" fill="#00b4ff"/><rect x="102" y="87" width="3" height="3" fill="#00d6ff"/><rect x="105" y="87" width="3" height="3" fill="#00d6ff"/><rect x="108" y="87" width="3" height="3" fill="#00d6ff"/><rect x="111" y="87" width="3" height="3" fill="#00d6ff"/><rect x="114" y="87" width="3" height="3" fill="#00bcff"/><rect x="117" y="87" width="3" height="3" fill="#0099ff"/><rect x="120" y="87" width="3" height="3" fill="#009dff"/><rect x="123" y="87" width="3" height="3" fill="#00afff"/><rect x="126" y="87" width="3" height="3" fill="#00d8ff"/><rect x="129" y="87" width="3" height="3" fill="#00e5ff"/><rect x="0" y="90" width="3" height="3" fill="#ffe500"/><rect x="3" y="90" width="3" height="3" fill="#ffc500"/><rect x="6" y="90" width="3" height="3" fill="#ff9400"/><rect x="9" y="90" width="3" height="3" fill="#ffcf00"/><rect x="12" y="90" width="3" height="3" fill="#ffe300"/><rect x="15" y="90" width="3" height="3" fill="#ff9b00"/><rect x="18" y="90" width="3" height="3" fill="#ffb300"/><rect x="21" y="90" width="3" height="3" fill="#f7ff07"/><rect x="24" y="90" width="3" height="3" fill="#7cff82"/><rect x="27" y="90" width="3" height="3" fill="#2fffcf"/><rect x="30" y="90" width="3" height="3" fill="#68ff96"/><rect x="33" y="90" width="3" height="3" fill="#6dff91"/><rect x="36" y="90" width="3" height="3" fill="#4fffaf"/><rect x="39" y="90" width="3" height="3" fill="#35ffc9"/><rect x="42" y="90" width="3" height="3" fill="#0fffef"/><rect x="45" y="90" width="3" height="3" fill="#00bdff"/><rect x="48" y="90" width="3" height="3" fill="#00b1ff"/><rect x="51" y="90" width="3" height="3" fill="#00dfff"/><rect x="54" y="90" width="3" height="3" fill="#00cdff"/><rect x="57" y="90" width="3" height="3" fill="#00bcff"/><rect x="60" y="90" width="3" height="3" fill="#00d8ff"/><rect x="63" y="90" width="3" height="3" fill="#00e5ff"/><rect x="66" y="90" width="3" height="3" fill="#00e5ff"/><rect x="69" y="90" width="3" height="3" fill="#00e5ff"/><rect x="72" y="90" width="3" height="3" fill="#00deff"/><rect x="75" y="90" width="3" height="3" fill="#00b1ff"/><rect x="78" y="90" width="3" height="3" fill="#0099ff"/><rect x="81" y="90" width="3" height="3" fill="#0099ff"/><rect x="84" y="90" width="3" height="3" fill="#0099ff"/><rect x="87" y="90" width="3" height="3" fill="#0099ff"/><rect x="90" y="90" width="3" height="3" fill="#0099ff"/><rect x="93" y="90" width="3" height="3" fill="#0099ff"/><rect x="96" y="90" width="3" height="3" fill="#0099ff"/><rect x="99" y="90" width="3" height="3" fill="#009fff"/><rect x="102" y="90" width="3" height="3" fill="#00a8ff"/><rect x="105" y="90" width="3" height="3" fill="#00a8ff"/><rect x="108" y="90" width="3" height="3" fill="#00a8ff"/><rect x="111" y="90" width="3" height="3" fill="#00a8ff"/><rect x="114" y="90" width="3" height="3" fill="#00a1ff"/><rect x="117" y="90" width="3" height="3" fill="#0099ff"/><rect x="120" y="90" width="3" height="3" fill="#00abff"/><rect x="123" y="90" width="3" height="3" fill="#00c1ff"/><rect x="126" y="90" width="3" height="3" fill="#00dcff"/><rect x="129" y="90" width="3" height="3" fill="#00e5ff"/><rect x="0" y="93" width="3" height="3" fill="#a3ff5b"/><rect x="3" y="93" width="3" height="3" fill="#e3ff1b"/><rect x="6" y="93" width="3" height="3" fill="#ffb900"/><rect x="9" y="93" width="3" height="3" fill="#fff000"/><rect x="12" y="93" width="3" height="3" fill="#fffd00"/><rect x="15" y="93" width="3" height="3" fill="#ffa100"/><rect x="18" y="93" width="3" height="3" fill="#ffae00"/><rect x="21" y="93" width="3" height="3" fill="#fffa00"/><rect x="24" y="93" width="3" height="3" fill="#7eff80"/><rect x="27" y="93" width="3" height="3" fill="#25ffd9"/><rect x="30" y="93" width="3" height="3" fill="#53ffab"/><rect x="33" y="93" width="3" height="3" fill="#53ffab"/><rect x="36" y="93" width="3" height="3" fill="#33ffcb"/><rect x="39" y="93" width="3" height="3" fill="#24ffda"/><rect x="42" y="93" width="3" height="3" fill="#08fff6"/><rect x="45" y="93" width="3" height="3" fill="#00bbff"/><rect x="48" y="93" width="3" height="3" fill="#00b1ff"/><rect x="51" y="93" width="3" height="3" fill="#00dfff"/><rect x="54" y="93" width="3" height="3" fill="#00d9ff"/><rect x="57" y="93" width="3" height="3" fill="#00d1ff"/><rect x="60" y="93" width="3" height="3" fill="#00deff"/><rect x="63" y="93" width="3" height="3" fill="#00e5ff"/><rect x="66" y="93" width="3" height="3" fill="#00e5ff"/><rect x="69" y="93" width="3" height="3" fill="#00e5ff"/><rect x="72" y="93" width="3" height="3" fill="#00deff"/><rect x="75" y="93" width="3" height="3" fill="#00b1ff"/><rect x="78" y="93" width="3" height="3" fill="#0099ff"/><rect x="81" y="93" width="3" height="3" fill="#0099ff"/><rect x="84" y="93" width="3" height="3" fill="#0099ff"/><rect x="87" y="93" width="3" height="3" fill="#0099ff"/><rect x="90" y="93" width="3" height="3" fill="#0099ff"/><rect x="93" y="93" width="3" height="3" fill="#0099ff"/><rect x="96" y="93" width="3" height="3" fill="#0099ff"/><rect x="99" y="93" width="3" height="3" fill="#0099ff"/><rect x="102" y="93" width="3" height="3" fill="#0099ff"/><rect x="105" y="93" width="3" height="3" fill="#0099ff"/><rect x="108" y="93" width="3" height="3" fill="#0099ff"/><rect x="111" y="93" width="3" height="3" fill="#0099ff"/><rect x="114" y="93" width="3" height="3" fill="#0099ff"/><rect x="117" y="93" width="3" height="3" fill="#0099ff"/><rect x="120" y="93" width="3" height="3" fill="#00a7ff"/><rect x="123" y="93" width="3" height="3" fill="#00bbff"/><rect x="126" y="93" width="3" height="3" fill="#00dbff"/><rect x="129" y="93" width="3" height="3" fill="#00e5ff"/><rect x="0" y="96" width="3" height="3" fill="#19ffe5"/><rect x="3" y="96" width="3" height="3" fill="#7dff81"/><rect x="6" y="96" width="3" height="3" fill="#ffe800"/><rect x="9" y="96" width="3" height="3" fill="#e4ff1a"/><rect x="12" y="96" width="3" height="3" fill="#e1ff1d"/><rect x="15" y="96" width="3" height="3" fill="#ffaa00"/><rect x="18" y="96" width="3" height="3" fill="#ffae00"/><rect x="21" y="96" width="3" height="3" fill="#fffa00"/><rect x="24" y="96" width="3" height="3" fill="#7eff80"/><rect x="27" y="96" width="3" height="3" fill="#1fffdf"/><rect x="30" y="96" width="3" height="3" fill="#36ffc8"/><rect x="33" y="96" width="3" height="3" fill="#32ffcc"/><rect x="36" y="96" width="3" height="3" fill="#1bffe3"/><rect x="39" y="96" width="3" height="3" fill="#19ffe5"/><rect x="42" y="96" width="3" height="3" fill="#08fff6"/><rect x="45" y="96" width="3" height="3" fill="#00bbff"/><rect x="48" y="96" width="3" height="3" fill="#00b1ff"/><rect x="51" y="96" width="3" height="3" fill="#00dfff"/><rect x="54" y="96" width="3" height="3" fill="#00e5ff"/><rect x="57" y="96" width="3" height="3" fill="#00e5ff"/><rect x="60" y="96" width="3" height="3" fill="#00e5ff"/><rect x="63" y="96" width="3" height="3" fill="#00e5ff"/><rect x="66" y="96" width="3" height="3" fill="#00e5ff"/><rect x="69" y="96" width="3" height="3" fill="#00e5ff"/><rect x="72" y="96" width="3" height="3" fill="#00deff"/><rect x="75" y="96" width="3" height="3" fill="#00b1ff"/><rect x="78" y="96" width="3" height="3" fill="#0099ff"/><rect x="81" y="96" width="3" height="3" fill="#0099ff"/><rect x="84" y="96" width="3" height="3" fill="#0099ff"/><rect x="87" y="96" width="3" height="3" fill="#0099ff"/><rect x="90" y="96" width="3" height="3" fill="#0099ff"/><rect x="93" y="96" width="3" height="3" fill="#0099ff"/><rect x="96" y="96" width="3" height="3" fill="#0099ff"/><rect x="99" y="96" width="3" height="3" fill="#0099ff"/><rect x="102" y="96" width="3" height="3" fill="#0099ff"/><rect x="105" y="96" width="3" height="3" fill="#0099ff"/><rect x="108" y="96" width="3" height="3" fill="#0099ff"/><rect x="111" y="96" width="3" height="3" fill="#0099ff"/><rect x="114" y="96" width="3" height="3" fill="#0099ff"/><rect x="117" y="96" width="3" height="3" fill="#0099ff"/><rect x="120" y="96" width="3" height="3" fill="#0099ff"/><rect x="123" y="96" width="3" height="3" fill="#00a9ff"/><rect x="126" y="96" width="3" height="3" fill="#00d6ff"/><rect x="129" y="96" width="3" height="3" fill="#00e5ff"/><rect x="0" y="99" width="3" height="3" fill="#00e2ff"/><rect x="3" y="99" width="3" height="3" fill="#48ffb6"/><rect x="6" y="99" width="3" height="3" fill="#e0ff1e"/><rect x="9" y="99" width="3" height="3" fill="#ceff30"/><rect x="12" y="99" width="3" height="3" fill="#daff24"/><rect x="15" y="99" width="3" height="3" fill="#ffc800"/><rect x="18" y="99" width="3" height="3" fill="#ffc100"/><rect x="21" y="99" width="3" height="3" fill="#ffed00"/><rect x="24" y="99" width="3" height="3" fill="#7cff82"/><rect x="27" y="99" width="3" height="3" fill="#0efff0"/><rect x="30" y="99" width="3" height="3" fill="#21ffdd"/><rect x="33" y="99" width="3" height="3" fill="#23ffdb"/><rect x="36" y="99" width="3" height="3" fill="#1affe4"/><rect x="39" y="99" width="3" height="3" fill="#19ffe5"/><rect x="42" y="99" width="3" height="3" fill="#08fff6"/><rect x="45" y="99" width="3" height="3" fill="#00bbff"/><rect x="48" y="99" width="3" height="3" fill="#00b1ff"/><rect x="51" y="99" width="3" height="3" fill="#00dfff"/><rect x="54" y="99" width="3" height="3" fill="#00d9ff"/><rect x="57" y="99" width="3" height="3" fill="#00d1ff"/><rect x="60" y="99" width="3" height="3" fill="#00deff"/><rect x="63" y="99" width="3" height="3" fill="#00d7ff"/><rect x="66" y="99" width="3" height="3" fill="#00bcff"/><rect x="69" y="99" width="3" height="3" fill="#00b7ff"/><rect x="72" y="99" width="3" height="3" fill="#00b4ff"/><rect x="75" y="99" width="3" height="3" fill="#00a2ff"/><rect x="78" y="99" width="3" height="3" fill="#0099ff"/><rect x="81" y="99" width="3" height="3" fill="#0099ff"/><rect x="84" y="99" width="3" height="3" fill="#0099ff"/><rect x="87" y="99" width="3" height="3" fill="#0099ff"/><rect x="90" y="99" width="3" height="3" fill="#0099ff"/><rect x="93" y="99" width="3" height="3" fill="#0099ff"/><rect x="96" y="99" width="3" height="3" fill="#0099ff"/><rect x="99" y="99" width="3" height="3" fill="#0099ff"/><rect x="102" y="99" width="3" height="3" fill="#0099ff"/><rect x="105" y="99" width="3" height="3" fill="#0099ff"/><rect x="108" y="99" width="3" height="3" fill="#0099ff"/><rect x="111" y="99" width="3" height="3" fill="#0099ff"/><rect x="114" y="99" width="3" height="3" fill="#00acff"/><rect x="117" y="99" width="3" height="3" fill="#00c6ff"/><rect x="120" y="99" width="3" height="3" fill="#00aaff"/><rect x="123" y="99" width="3" height="3" fill="#009fff"/><rect x="126" y="99" width="3" height="3" fill="#00b1ff"/><rect x="129" y="99" width="3" height="3" fill="#00b7ff"/><rect x="0" y="102" width="3" height="3" fill="#00bfff"/><rect x="3" y="102" width="3" height="3" fill="#24ffda"/><rect x="6" y="102" width="3" height="3" fill="#bcff42"/><rect x="9" y="102" width="3" height="3" fill="#bfff3f"/><rect x="12" y="102" width="3" height="3" fill="#d6ff28"/><rect x="15" y="102" width="3" height="3" fill="#ffdb00"/><rect x="18" y="102" width="3" height="3" fill="#ffcd00"/><rect x="21" y="102" width="3" height="3" fill="#ffe400"/><rect x="24" y="102" width="3" height="3" fill="#7bff83"/><rect x="27" y="102" width="3" height="3" fill="#03fffb"/><rect x="30" y="102" width="3" height="3" fill="#13ffeb"/><rect x="33" y="102" width="3" height="3" fill="#19ffe5"/><rect x="36" y="102" width="3" height="3" fill="#19ffe5"/><rect x="39" y="102" width="3" height="3" fill="#19ffe5"/><rect x="42" y="102" width="3" height="3" fill="#08fff6"/><rect x="45" y="102" width="3" height="3" fill="#00bbff"/><rect x="48" y="102" width="3" height="3" fill="#00b1ff"/><rect x="51" y="102" width="3" height="3" fill="#00dfff"/><rect x="54" y="102" width="3" height="3" fill="#00d1ff"/><rect x="57" y="102" width="3" height="3" fill="#00c3ff"/><rect x="60" y="102" width="3" height="3" fill="#00daff"/><rect x="63" y="102" width="3" height="3" fill="#00ceff"/><rect x="66" y="102" width="3" height="3" fill="#00a0ff"/><rect x="69" y="102" width="3" height="3" fill="#0099ff"/><rect x="72" y="102" width="3" height="3" fill="#0099ff"/><rect x="75" y="102" width="3" height="3" fill="#0099ff"/><rect x="78" y="102" width="3" height="3" fill="#0099ff"/><rect x="81" y="102" width="3" height="3" fill="#0099ff"/><rect x="84" y="102" width="3" height="3" fill="#0099ff"/><rect x="87" y="102" width="3" height="3" fill="#0099ff"/><rect x="90" y="102" width="3" height="3" fill="#0099ff"/><rect x="93" y="102" width="3" height="3" fill="#0099ff"/><rect x="96" y="102" width="3" height="3" fill="#0099ff"/><rect x="99" y="102" width="3" height="3" fill="#0099ff"/><rect x="102" y="102" width="3" height="3" fill="#0099ff"/><rect x="105" y="102" width="3" height="3" fill="#0099ff"/><rect x="108" y="102" width="3" height="3" fill="#0099ff"/><rect x="111" y="102" width="3" height="3" fill="#0099ff"/><rect x="114" y="102" width="3" height="3" fill="#00b9ff"/><rect x="117" y="102" width="3" height="3" fill="#00e4ff"/><rect x="120" y="102" width="3" height="3" fill="#00b6ff"/><rect x="123" y="102" width="3" height="3" fill="#0099ff"/><rect x="126" y="102" width="3" height="3" fill="#0099ff"/><rect x="129" y="102" width="3" height="3" fill="#0099ff"/></svg>
<canvas id="spec" class="a" style="left:729px;top:73px" width="131" height="105"></canvas>
<svg class="a" style="left:700px;top:60px" width="190" height="140">
<rect x="28.5" y="12.5" width="132" height="106" fill="none" stroke="#e6ecf4" stroke-width="1.3"/>
<defs><linearGradient id="cb" x1="0" y1="0" x2="0" y2="1">
<stop offset="0" stop-color="#ff00ff"/><stop offset="0.2" stop-color="#ff0000"/><stop offset="0.4" stop-color="#ffff00"/><stop offset="0.6" stop-color="#00ffff"/><stop offset="0.8" stop-color="#0000ff"/><stop offset="1" stop-color="#000050"/></linearGradient></defs>
<rect x="163.5" y="12.5" width="6.5" height="106.5" fill="url(#cb)" stroke="#d8d0f0" stroke-width="0.8"/>
<g stroke="#dde4ee" stroke-width="1">
<line x1="25" y1="20.5" x2="28" y2="20.5"/><line x1="25" y1="30.5" x2="28" y2="30.5"/><line x1="25" y1="40.5" x2="28" y2="40.5"/><line x1="25" y1="50.5" x2="28" y2="50.5"/><line x1="25" y1="59.5" x2="28" y2="59.5"/><line x1="25" y1="69.5" x2="28" y2="69.5"/><line x1="25" y1="79.5" x2="28" y2="79.5"/><line x1="25" y1="89.5" x2="28" y2="89.5"/><line x1="25" y1="99.5" x2="28" y2="99.5"/><line x1="25" y1="109.5" x2="28" y2="109.5"/><line x1="25" y1="119" x2="28" y2="119"/>
<line x1="28.5" y1="119" x2="28.5" y2="123"/><line x1="82.5" y1="119" x2="82.5" y2="123"/><line x1="133.5" y1="119" x2="133.5" y2="123"/>
</g>
<g class="sl" text-anchor="end">
<text x="25" y="23.3">250</text><text x="25" y="33.3">Hz</text><text x="25" y="43">125</text><text x="25" y="62.2">63</text><text x="25" y="82.4">31.5</text><text x="25" y="101.6">16</text><text x="25" y="121.9">8</text>
</g>
<g class="sl">
<text x="27.5" y="132.6" text-anchor="middle">0</text><text x="82" y="132.6" text-anchor="middle">100</text><text x="106" y="133.6" text-anchor="middle">ms</text><text x="133.5" y="132.6" text-anchor="middle">200</text>
<text x="172" y="16">80</text><text x="172" y="24">dB</text><text x="172" y="37">70</text><text x="172" y="58">60</text><text x="172" y="79.5">50</text><text x="172" y="100.5">40</text><text x="172" y="122">30</text>
</g>
</svg>
<!-- found room modes -->
<div class="t tb" style="left:703px;top:202.5px">Found Room Modes:</div>
<div class="a" style="left:702px;top:213px;width:187px;height:117px;border:1px solid #9a9890;background:#fff"></div>
<div class="a" style="left:703px;top:214px;width:185px;height:15px;background:linear-gradient(#f4f3ea,#ebeadb 70%,#d8d5c4)"></div>
<div class="a" style="left:703px;top:240.1px;width:185px;height:1px;background:#ebebeb"></div>
<div class="a" style="left:703px;top:250.6px;width:185px;height:1px;background:#ebebeb"></div>
<div class="a" style="left:703px;top:261.3px;width:185px;height:1px;background:#ebebeb"></div>
<div class="a" style="left:703px;top:272.1px;width:185px;height:1px;background:#ebebeb"></div>
<div class="a" style="left:703px;top:282.6px;width:185px;height:1px;background:#ebebeb"></div>
<div class="a" style="left:703px;top:293.3px;width:185px;height:1px;background:#ebebeb"></div>
<div class="a" style="left:703px;top:304.2px;width:185px;height:1px;background:#ebebeb"></div>
<div class="a" style="left:703px;top:314.7px;width:185px;height:1px;background:#ebebeb"></div>
<div class="a" style="left:703px;top:325.5px;width:185px;height:1px;background:#ebebeb"></div>
<div class="a" style="left:730.5px;top:229px;width:1px;height:100px;background:#efefef"></div>
<div class="a" style="left:766px;top:229px;width:1px;height:100px;background:#efefef"></div>
<div class="a" style="left:803.5px;top:229px;width:1px;height:100px;background:#efefef"></div>
<div class="a" style="left:839.5px;top:229px;width:1px;height:100px;background:#efefef"></div>
<div class="a" style="left:728.7px;top:216px;width:1px;height:11px;background:#c8c5b4"></div>
<div class="a" style="left:764.6px;top:216px;width:1px;height:11px;background:#c8c5b4"></div>
<div class="a" style="left:801.8px;top:216px;width:1px;height:11px;background:#c8c5b4"></div>
<div class="a" style="left:837.9px;top:216px;width:1px;height:11px;background:#c8c5b4"></div>
<div class="t tb" style="left:711px;top:218px">Use</div>
<div class="t tb" style="left:736px;top:218px">f [Hz]</div>
<div class="t tb" style="left:772px;top:218px">Q</div>
<div class="t tb" style="left:810px;top:218px">G [dB]</div>
<div class="t tb" style="left:847px;top:218px">Type</div>
<svg class="a" style="left:706px;top:230px" width="10" height="10"><rect x="0.5" y="0.5" width="8" height="8" fill="#fff" stroke="#303030"/><path d="M2,4.5 L3.8,6.5 L7,2.5" fill="none" stroke="#000" stroke-width="1.6"/></svg>
<div class="t tb" style="left:718px;top:231px">1</div>
<div class="t tb" style="left:735px;top:231px">31</div>
<div class="t tb" style="left:771px;top:231px">10.6</div>
<div class="t tb" style="left:808px;top:231px">-14.75</div>
<div class="t tb" style="left:845px;top:231px">Mode</div>
<!-- action group -->
<div class="a" style="left:894px;top:70px;width:58px;height:143px;border:1px solid #d0d0bf;border-radius:3px"></div>
<div class="a" style="left:899px;top:66px;width:28px;height:9px;background:#ece9d8"></div>
<div class="t" style="left:901px;top:67px;font-size:8.6px;color:#1f4fb4">Action</div>
<div class="a" style="left:901px;top:81px;width:47px;height:16px;border:1px solid #3c5aa0;border-radius:3px;background:linear-gradient(#ffffff,#f0f0ea 80%,#d6d0c5);box-shadow:inset 0 0 0 1px #b8ccf4"></div>
<div class="t tb" style="left:908px;top:85px">Measure</div>
<div class="a" style="left:901px;top:101px;width:47px;height:7px;border:1px solid #aca899;border-radius:3px;background:#fff"></div>
<!-- slider -->
<div class="a" style="left:911px;top:130px;width:3px;height:60px;background:#fff;border-left:1px solid #a8a8a0;border-right:1px solid #e0e0d8"></div>
<div class="a" style="left:905px;top:126px;width:16px;height:7px;border:1px solid #6f8a6f;border-radius:2px;background:linear-gradient(#fff,#e8e8e0);box-shadow:inset 0 -1px 0 #21a121"></div>
<div class="a" style="left:901px;top:128.8px;width:2px;height:1px;background:#c4c1b0"></div>
<div class="a" style="left:922px;top:128.8px;width:2px;height:1px;background:#c4c1b0"></div>
<div class="a" style="left:901px;top:138.6px;width:2px;height:1px;background:#c4c1b0"></div>
<div class="a" style="left:922px;top:138.6px;width:2px;height:1px;background:#c4c1b0"></div>
<div class="a" style="left:901px;top:147.8px;width:2px;height:1px;background:#c4c1b0"></div>
<div class="a" style="left:922px;top:147.8px;width:2px;height:1px;background:#c4c1b0"></div>
<div class="a" style="left:901px;top:157.7px;width:2px;height:1px;background:#c4c1b0"></div>
<div class="a" style="left:922px;top:157.7px;width:2px;height:1px;background:#c4c1b0"></div>
<div class="a" style="left:901px;top:166.8px;width:2px;height:1px;background:#c4c1b0"></div>
<div class="a" style="left:922px;top:166.8px;width:2px;height:1px;background:#c4c1b0"></div>
<div class="a" style="left:901px;top:176.0px;width:2px;height:1px;background:#c4c1b0"></div>
<div class="a" style="left:922px;top:176.0px;width:2px;height:1px;background:#c4c1b0"></div>
<div class="a" style="left:901px;top:185.9px;width:2px;height:1px;background:#c4c1b0"></div>
<div class="a" style="left:922px;top:185.9px;width:2px;height:1px;background:#c4c1b0"></div>
<div class="a" style="left:937px;top:123px;width:8px;height:67px;background:#000"></div>
<div class="t" style="left:928.5px;top:118px;font-size:9.5px;font-weight:bold;color:#e01010">H</div>
<div class="t" style="left:928px;top:151px;font-size:9.5px;font-weight:bold;color:#20c020">G</div>
<div class="t" style="left:929px;top:184.5px;font-size:9.5px;font-weight:bold;color:#1010a0">L</div>
<div class="t tb" style="left:901px;top:199px">Output Level</div>
<!-- checkboxes -->
<div class="a" style="left:896px;top:220px;width:10px;height:10px;border:1px solid #1c5180;background:linear-gradient(135deg,#dcdcd7,#fff)"></div>
<div class="t tb" style="left:908px;top:221px">Result</div>
<div class="a" style="left:896px;top:232px;width:10px;height:10px;border:1px solid #cac8bb;background:#fff"></div>
<div class="t tb" style="left:908px;top:233px;color:#aca899">Modes+EQ</div>
<div class="a" style="left:896px;top:244px;width:10px;height:10px;border:1px solid #1c5180;background:linear-gradient(135deg,#dcdcd7,#fff)"></div>
<svg class="a" style="left:897px;top:245px" width="8" height="8"><path d="M1,3.5 L3,5.8 L7,1.5" fill="none" stroke="#21a121" stroke-width="1.6"/></svg>
<div class="t tb" style="left:908px;top:245px">Measured</div>
<!-- tabs -->
<div class="a" style="left:5px;top:551px;width:66px;height:18px;background:#fcfcfe;border-left:1px solid #919b9c;border-right:1px solid #919b9c"></div>
<div class="a" style="left:5px;top:551px;width:66px;height:3px;background:linear-gradient(#e68b2c,#ffc73c);border-radius:2px 2px 0 0"></div>
<div class="t tb" style="left:11px;top:557px">Room Analyzer</div>
<div class="a" style="left:71px;top:554px;width:51px;height:14px;background:linear-gradient(#fff,#f3f3ef 60%,#e4e2d8);border:1px solid #919b9c;border-bottom:none;border-radius:2px 2px 0 0"></div>
<div class="t tb" style="left:88px;top:556px">RTA</div>
<div class="a" style="left:123px;top:554px;width:47px;height:14px;background:linear-gradient(#fff,#f3f3ef 60%,#e4e2d8);border:1px solid #919b9c;border-bottom:none;border-radius:2px 2px 0 0"></div>
<div class="t tb" style="left:128px;top:556px">Full Range</div>
<!-- status bar -->
<div class="a" style="left:0;top:571px;width:975px;height:1px;background:#d6d2c2"></div>
<div class="a" style="left:0;top:572px;width:975px;height:1px;background:#fff"></div>
<div class="t tb" style="left:754px;top:576px">Freq: 313.36Hz</div>
<div class="a" style="left:824px;top:575px;width:1px;height:10px;background:#c5c2b2"></div>
<div class="t tb" style="left:829px;top:576px">Mag: 35.56dB</div>
<!-- taskbar -->
<div class="a" style="left:0;top:586px;width:975px;height:23px;background:linear-gradient(#3168d5 0,#4993e6 1px,#2157d7 3px,#2663e0 12px,#245edb 20px,#1941a5 23px)"></div>
<div class="a" style="left:0;top:586px;width:75px;height:23px;border-radius:0 6px 8px 0;background:linear-gradient(#4a9a4a 0,#6cc06c 2px,#48a448 6px,#3c963c 16px,#2e7e2e 23px)"></div>
<svg class="a" style="left:8px;top:590px" width="16" height="15"><path d="M1,3 Q4,1 7,3 V7 Q4,5 1,7Z" fill="#f04a1a"/><path d="M8,3 Q11,1 14,3 V7 Q11,5 8,7Z" fill="#60c030"/><path d="M1,8 Q4,6 7,8 V12 Q4,10 1,12Z" fill="#2a80f0"/><path d="M8,8 Q11,6 14,8 V12 Q11,10 8,12Z" fill="#f8c820"/></svg>
<div class="t" style="left:26px;top:590px;font-size:12.5px;font-weight:bold;font-style:italic;color:#fff;text-shadow:1px 1px 1px #1a4a1a">Start</div>
<div class="a" style="left:85px;top:591px;width:10px;height:12px;background:#fff;border:1px solid #303030"></div>
<div class="t" style="left:87px;top:592px;font-size:9px;font-weight:bold;color:#000">?</div>
<div class="a" style="left:100px;top:589px;width:120px;height:20px;border-radius:3px;background:linear-gradient(#1a48b0,#1e50bc 50%,#2058c4);box-shadow:inset 1px 1px 1px #10307a"></div>
<svg class="a" style="left:107px;top:591px" width="13" height="13"><rect width="13" height="13" fill="#c8d0dc"/><path d="M1,12 L6.5,3 L12,12 Z" fill="#101010"/></svg>
<div class="t" style="left:122px;top:594px;font-size:8.6px;color:#fff">Untitled* - XTZ Room ...</div>
<div class="a" style="left:767px;top:586px;width:208px;height:23px;background:linear-gradient(#1a98f6 0,#22aaff 2px,#1296f4 10px,#0e86e6 20px,#0a70cc 23px);border-left:1px solid #0a5ab8"></div>
<div class="a" style="left:761px;top:591px;width:13px;height:13px;border-radius:50%;background:radial-gradient(circle at 40% 40%,#a8d8ff,#3a8ce8);border:1px solid #6ab0f0"></div><svg class="a" style="left:763px;top:593px" width="9" height="9"><path d="M6,1.5 L3,4.5 L6,7.5" fill="none" stroke="#fff" stroke-width="1.8"/></svg>
<svg class="a" style="left:775px;top:590px" width="165" height="16">
<g transform="translate(0,0)"><path d="M3,3 L6,1 L9,3 L6,5Z M9,3 L12,1 L15,3 L12,5Z M3,7 L6,5 L9,7 L6,9Z M9,7 L12,5 L15,7 L12,9Z M6,10 L9,8 L12,10 L9,12Z" fill="#f0f4ff"/></g>
<g transform="translate(14,1)"><rect x="1" y="2" width="9" height="7" fill="#203060" stroke="#e0e8f0"/><rect x="3" y="10" width="6" height="2" fill="#e0e8f0"/><path d="M11,2 Q13,5 11,8" stroke="#c0d0e0" fill="none"/></g>
<g transform="translate(28,1)"><rect x="1" y="4" width="9" height="7" fill="#20306a"/><path d="M6,1 L12,1 L12,8 L8,12 L6,10Z" fill="#d03020"/><rect x="1" y="10" width="6" height="2" fill="#e8e8f8"/></g>
<g transform="translate(42,1)"><path d="M2,4 Q6,0 11,3 L12,9 Q8,13 3,11Z" fill="#f0f8b0"/></g>
<g transform="translate(56,1)"><ellipse cx="6" cy="3" rx="5" ry="2" fill="#e8f0f8"/><rect x="1" y="4" width="10" height="2" fill="#c0d0e8"/><rect x="1" y="7" width="10" height="2" fill="#e8f0f8"/><rect x="1" y="10" width="10" height="2" fill="#c0d0e8"/></g>
<g transform="translate(68,1)"><circle cx="6" cy="6" r="5.5" fill="#5a4a3a"/><path d="M4,3 Q9,4 6,10" stroke="#f0d8a0" stroke-width="2" fill="none"/></g>
<g transform="translate(84,1)"><path d="M1,11 L6,5 L12,2 L13,4 L8,8 L3,12Z" fill="#c8d0e0"/><path d="M3,10 L6,7" stroke="#e06060" stroke-width="1.5"/></g>
<g transform="translate(96,0)"><path d="M2,1 Q2,8 6,11 L10,12" stroke="#f0f0f0" stroke-width="1.6" fill="none"/><rect x="8" y="9" width="5" height="4" fill="#f0c020"/></g>
<g transform="translate(109,1)"><path d="M1,6 L7,1 L13,4 L13,11 L1,11Z" fill="#20b020"/><path d="M4,7 L6,9 L10,4" stroke="#fff" stroke-width="1.6" fill="none"/></g>
<g transform="translate(123,1)"><rect x="1" y="1" width="11" height="11" fill="#1010c0" stroke="#101060"/><rect x="3" y="3" width="7" height="7" fill="#2030e0"/></g>
<g transform="translate(137,1)"><path d="M2,5 L5,12 L7,7 L9,12 L12,5 L9,8 L7,1 L5,8Z" fill="#e8b030"/><path d="M6,1 L8,1 L7,8Z" fill="#e0e8ff"/></g>
<g transform="translate(151,1)"><rect x="1" y="1" width="11" height="9" fill="#d8c8c8" stroke="#f0f0f0"/><rect x="2" y="11" width="9" height="1.5" fill="#203050"/></g>
</svg>
<div class="t" style="left:943px;top:594px;font-size:8.6px;color:#fff">21:52</div>
<script>
(function(){
var d="2.2,2,2.2,2,1.8,1.9,1.6,1.05,0.85,0.85,0.6,0.6,0.5,0.35,0.35,0.35,0.35,0.3,0.3,0.3,0.3,0.3,0.3,0.3,0.3,0.3;2.5,2,2.5,2,2,1.9,1.6,1.05,0.85,0.85,0.6,0.6,0.45,0.3,0.3,0.3,0.3,0.3,0.3,0.3,0.3,0.3,0.3,0.3,0.3,0.3;2.8,2,2.8,2.2,2.2,2,1.8,1.05,0.85,0.95,0.65,0.65,0.5,0.3,0.3,0.3,0.3,0.3,0.3,0.3,0.3,0.3,0.3,0.3,0.3,0.3;3,2.2,3,2.2,2.5,2.2,2.1,1.2,1.05,0.95,0.7,0.7,0.55,0.5,0.5,0.5,0.3,0.3,0.3,0.3,0.3,0.3,0.3,0.3,0.3,0.3;3.5,3,3.5,2.5,3,2.5,2.2,1.45,1.2,1.2,0.85,1,0.9,0.9,0.7,0.75,0.5,0.3,0.3,0.3,0.3,0.3,0.3,0.3,0.3,0.3;3.8,3,3.5,3,3.2,2.8,2.5,2,1.65,1.75,1.4,1.25,1.25,1.15,1,1.05,0.8,0.5,0.5,0.5,0.5,0.5,0.5,0.5,0.5,0.5;4.2,3.8,3.8,3,3.5,3,2.8,2.35,2,2.1,1.8,1.65,1.65,1.35,1,1.25,1,1,1,1,0.7,0.7,0.7,0.7,0.7,0.7;5,4,4,3.2,3.5,3.2,3,2.75,2.35,2.35,2.1,2.1,2.1,1.75,1.75,2.15,1.5,1.5,1.5,1.5,1.5,1.5,1.3,1.3,1,1;5.5,4.5,4.5,3.5,3.8,3.5,3.3,3,2.6,2.35,2.35,2.35,2.15,2,1.75,1.75,1.75,1.8,1.5,1.5,1.5,1.5,1.3,1,1,1;5.5,5,5,3.8,4.2,3.6,3.5,3.25,2.6,2.75,2.5,2.65,2.3,2.15,1.75,2.15,1.75,2,1.8,1.5,1.5,1.5,1.5,1.3,1,1;5.5,5.5,5,4.5,5,4,3.8,3.5,2.85,3.25,2.85,2.75,2,2.65,2.5,2.4,1.9,1.8,1.8,1.5,1.5,1.5,1.3,1,1,1;6.5,6.2,5.8,5.6,5.6,5.1,4.6,4.6,4.1,4.1,4.1,4,3.5,4,4.5,4,3,2.8,2.5,1.8,1.5,1.5,1.5,1.5,1.5,1;8.3,8.3,8,7.8,7.5,7.2,7,6.8,6.5,6.2,6,5.8,5.5,5,5,4.5,3.2,3,2.5,1.8,1.8,1.8,1.8,1.8,1.8,1.5;8.8,8.8,8,8,8,7.8,7.6,7.5,7.2,6.5,6.2,6,5.8,5.5,5,5,3.2,2.8,2.2,1.8,1.8,2,2.2,2.2,2.2,2.2;8.2,8,7.2,7.5,6.5,6,5.8,5.5,5.2,5,5.5,5.5,5.5,5,5,4.5,2.8,2.2,1.8,1.8,2.2,2.8,2.2,2.2,2.2,1.8;8,8,7,7,6.2,5,5.5,5.5,5.3,3.2,3.5,3.2,3.8,5,5,4.5,3.5,3.5,2.8,2.2,2.2,2.8,3.5,3.5,2.8,1.8;7.2,7.5,7,6.8,6,4.5,5.5,5.2,5,3.2,3.2,3.5,3.8,3.8,3.2,3.2,3.8,3.8,3.5,3,2.8,3.2,3.8,3.8,3.2,2.8;7,7,6.2,7,5.5,4.5,5,5,4.5,3.2,3.8,3.2,3.8,3.8,3.8,3.2,3.2,3.2,3.2,3.2,3.8,3.8,3.8,3.2,3.2,3.8;6,6.8,6,7,6,4.2,5,4.5,4.2,3.2,3.8,3.5,3.8,3.8,3.8,3.2,3.2,3.2,3.2,3.2,3.2,3.2,3.2,3.2,3.5,3.8;4.2,6.2,5.5,7,6,4.2,4.5,4.2,4.2,3.2,3.8,3.8,3.8,3.8,3.8,3.2,3.2,3.2,3.2,3.2,3.2,3.2,3.2,3.2,3.2,3.8;3.5,5.5,5.5,6.5,6.2,4,4.2,4.2,4.2,3.2,3.8,3.5,3.8,3.2,3.2,3.2,3.2,3.2,3.2,3.2,3.2,3.2,3.2,3.8,3.2,3.2".split(';').map(function(r){return r.split(',').map(Number)});
var R=d.length,C=d[0].length;
var cv=document.getElementById('spec'),cx=cv.getContext('2d');
var W=cv.width,H=cv.height,im=cx.createImageData(W,H);
var stops=[[0,[0,0,96]],[2,[0,0,255]],[4,[0,255,255]],[6,[255,255,0]],[8,[255,0,0]],[10,[255,0,255]]];
function cm(v){if(v<=0)return stops[0][1];if(v>=10)return stops[5][1];
for(var i=0;i<5;i++){var a=stops[i],b=stops[i+1];if(v<=b[0]){var t=(v-a[0])/(b[0]-a[0]);return [a[1][0]+(b[1][0]-a[1][0])*t,a[1][1]+(b[1][1]-a[1][1])*t,a[1][2]+(b[1][2]-a[1][2])*t]}}}
for(var y=0;y<H;y++){var fyv=(y+0.5)/H*R-0.5;var y0=Math.max(0,Math.min(R-1,Math.floor(fyv))),y1=Math.min(R-1,y0+1),ty=Math.max(0,Math.min(1,fyv-y0));
for(var x=0;x<W;x++){var fxv=(x+0.5)/W*C-0.5;var x0=Math.max(0,Math.min(C-1,Math.floor(fxv))),x1=Math.min(C-1,x0+1),tx=Math.max(0,Math.min(1,fxv-x0));
var v=(d[y0][x0]*(1-tx)+d[y0][x1]*tx)*(1-ty)+(d[y1][x0]*(1-tx)+d[y1][x1]*tx)*ty;
var c=cm(v),k=(y*W+x)*4;im.data[k]=c[0];im.data[k+1]=c[1];im.data[k+2]=c[2];im.data[k+3]=255}}
cx.putImageData(im,0,0);
})();
</script>
</body></html>
